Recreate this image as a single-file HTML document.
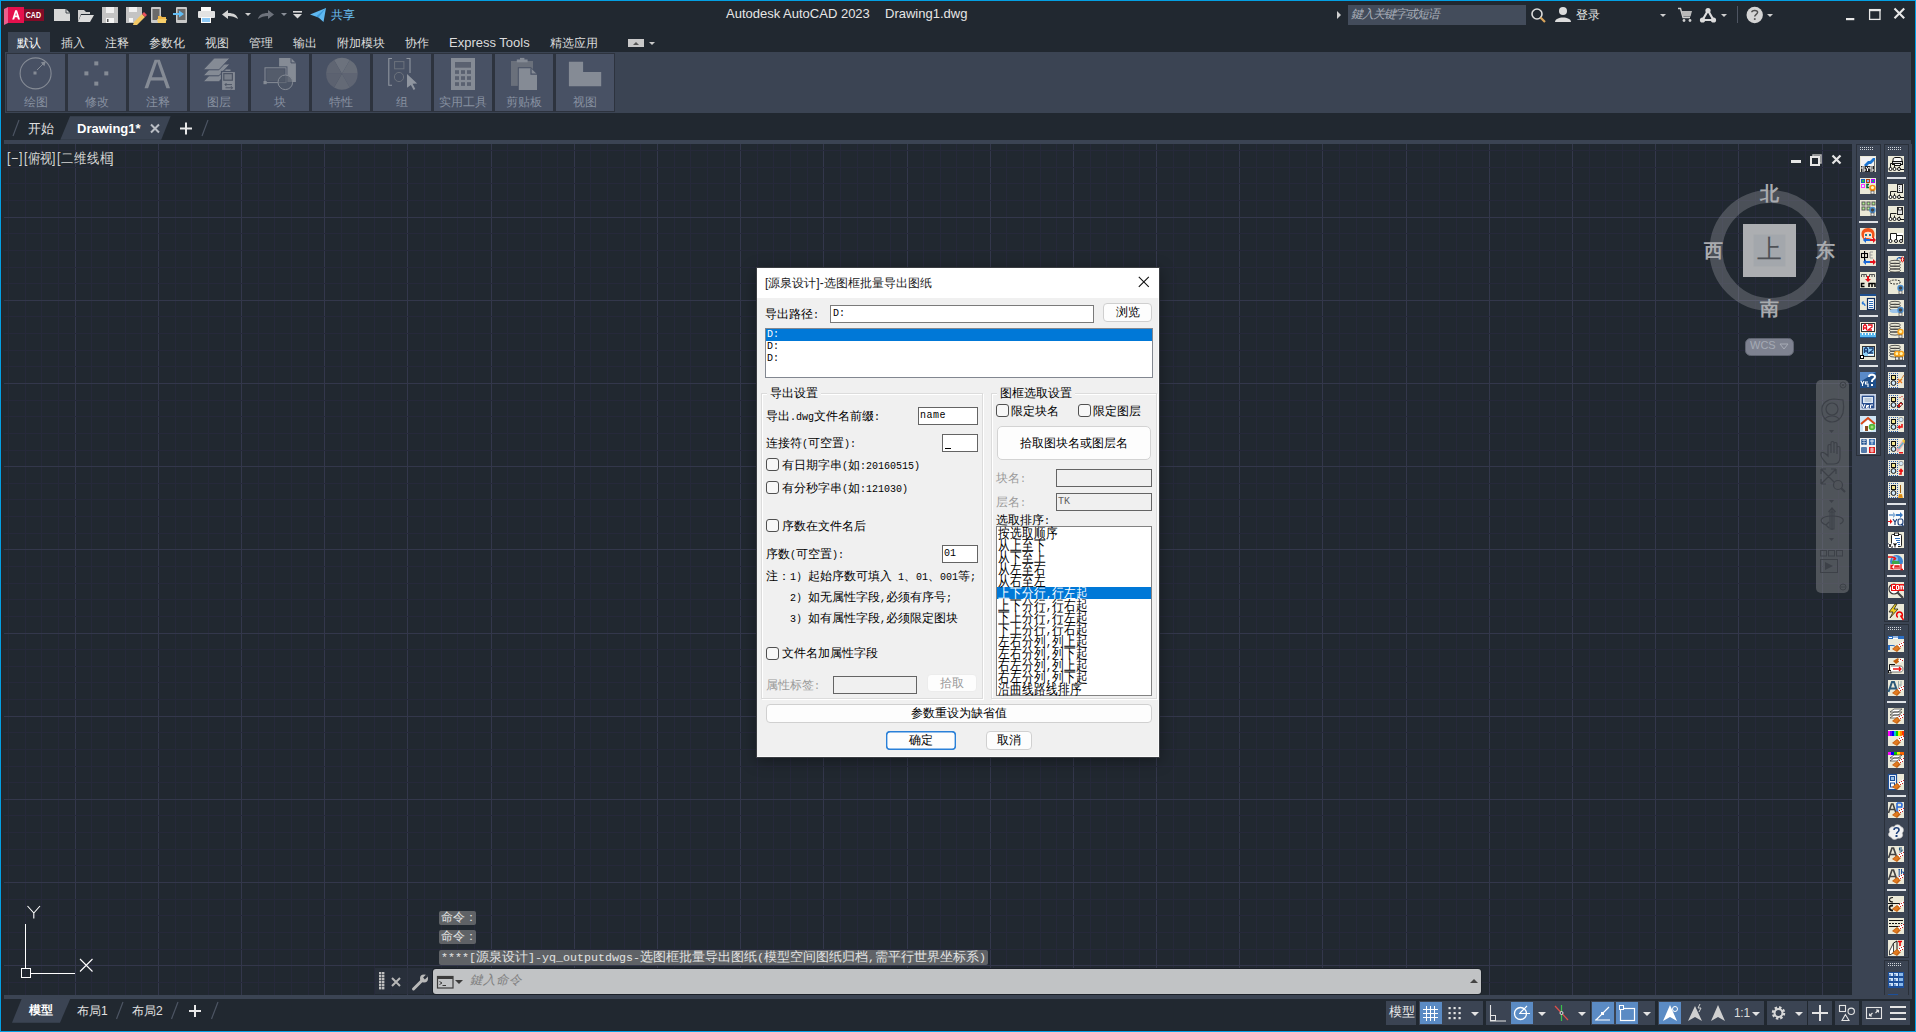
<!DOCTYPE html><html><head><meta charset="utf-8"><style>
*{margin:0;padding:0;box-sizing:border-box}
html,body{width:1916px;height:1032px;overflow:hidden;background:#212830;font-family:"Liberation Sans",sans-serif}
.a{position:absolute}
.t{position:absolute;white-space:nowrap;line-height:1}
svg{position:absolute;overflow:visible}
</style></head><body><div class="a" style="left:0;top:0;width:1916px;height:1032px;border:1px solid #03a0e4"></div>
<div class="a" style="left:1px;top:1px;width:1px;height:1030px;background:#262429"></div>
<svg style="left:0;top:0" width="50" height="30">
<path d="M4 9 L8 7 L8 23 L4 25 Z" fill="#ea5f8c"/>
<rect x="8" y="7" width="16" height="16" fill="#e5104d"/>
<rect x="24" y="9" width="20" height="12" fill="#820b27"/>
<path d="M12.2 19.5 L15.2 10.2 L17 10.2 L20 19.5 L18 19.5 L17.3 17.2 L14.9 17.2 L14.2 19.5 Z M15.4 15.4 L16.8 15.4 L16.1 12.6 Z" fill="#fff"/>
<text x="25.8" y="18.2" font-family="Liberation Sans" font-weight="bold" font-size="8.5" fill="#fff" textLength="15.2" lengthAdjust="spacingAndGlyphs">CAD</text>
</svg>
<svg style="left:0;top:0" width="360" height="30">
<path d="M54 9 H66 L70 13 V21 H54 Z" fill="#d8d8d8"/><path d="M66 9 L70 13 H66Z" fill="#212830" opacity=".0"/>
<path d="M66 9 V13 H70" fill="none" stroke="#212830" stroke-width="0.8"/>
<path d="M78 10 H84 L86 12 H90 V14 H81 L78 22 Z" fill="#cfcfcf"/><path d="M81 15 H94 L90 22 H78 Z" fill="#dcdcdc"/>
<path d="M102 7 H118 V23 H102 Z" fill="#c4c4c4"/><rect x="106" y="7" width="8" height="6" fill="#f0f0f0"/><rect x="106" y="18" width="8" height="5" fill="#f5f5f5"/><rect x="107" y="19" width="1.5" height="3" fill="#555"/>
<path d="M126 7 H142 V17 L135 23 H126 Z" fill="#c4c4c4"/><rect x="129" y="7" width="8" height="5" fill="#f0f0f0"/><rect x="129" y="18" width="4" height="4" fill="#f5f5f5"/>
<path d="M134 22 L142 14 L145 17 L137 25 L133 25 Z" fill="#f2c866"/><path d="M142 14 L144 12 L147 15 L145 17 Z" fill="#e8505a"/>
<rect x="151" y="7" width="10" height="16" rx="1" fill="#c9c9c9"/><rect x="152.5" y="9" width="7" height="11" fill="#6a6a6a"/>
<path d="M158 16 H161 L162 17 H166 V23 H158 Z" fill="#f0b84a"/><path d="M157 19 H167 L165 23 H158Z" fill="#f7cf6b"/>
<rect x="176" y="7" width="11" height="16" rx="1" fill="#c9c9c9"/><rect x="177.5" y="9" width="8" height="11" fill="#6a6a6a"/>
<path d="M173 13 H179 V10.5 L184 14 L179 17.5 V15 H173Z" fill="#62bdf5"/>
<rect x="201" y="7" width="10" height="5" fill="#fafafa"/><rect x="198" y="11" width="17" height="7" rx="1" fill="#e2e2e2"/><rect x="201" y="17" width="10" height="6" fill="#fafafa"/><rect x="202" y="18" width="8" height="4" fill="#8cc8f5"/>
<path d="M222 14.5 L228 10 V13 C234 13 237 15 238 19 C235 17 232 16 228 16 V19 Z" fill="#d4d4d4"/>
<path d="M245 13 H251 L248 16Z" fill="#cfcfcf"/>
<path d="M274 14.5 L268 10 V13 C262 13 259 15 258 19 C261 17 264 16 268 16 V19 Z" fill="#6d727b"/>
<path d="M281 13 H287 L284 16Z" fill="#8a8f98"/>
<rect x="293" y="11" width="9" height="1.6" fill="#d8d8d8"/><path d="M293 14 H302 L297.5 18.5Z" fill="#d8d8d8"/>
<path d="M310 14.5 L326 8 L323.5 22 L318.5 17.5 Z" fill="#5fb8f0"/><path d="M318.5 17.5 L326 8 L316 16.5Z" fill="#3d9ad8"/>
</svg>
<div class="t" style="left:331px;top:9px;font-size:12px;color:#6cc1f5">共享</div>
<div class="t" style="left:726px;top:7px;font-size:13px;color:#e6e6e6">Autodesk AutoCAD 2023</div>
<div class="t" style="left:885px;top:7px;font-size:13px;color:#e6e6e6">Drawing1.dwg</div>
<svg style="left:1330px;top:0" width="586" height="30">
<path d="M7 11 L11 15 L7 19Z" fill="#d0d0d0"/>
<rect x="18" y="5" width="178" height="20" fill="#434c5b"/>
<circle cx="207" cy="14" r="5" fill="none" stroke="#dcdcdc" stroke-width="1.6"/><path d="M210.5 17.5 L215 22" stroke="#d9a45a" stroke-width="2.2"/>
<circle cx="233" cy="11" r="4" fill="#dcdcdc"/><path d="M225 22 C225 16 241 16 241 22Z" fill="#dcdcdc"/>
<path d="M330 14 H336 L333 17Z" fill="#cfcfcf"/>
<path d="M348 8.5 H350.5 L353 17.5 H360" fill="none" stroke="#cfcfcf" stroke-width="1.4"/><path d="M351.5 11 H362 L360.5 16.5 H353Z" fill="#b9b9b9"/><circle cx="354" cy="20.5" r="1.4" fill="#cfcfcf"/><circle cx="360" cy="20.5" r="1.4" fill="#cfcfcf"/>
<path d="M378 10.5 L372.5 20 H383.5 Z" stroke="#dcdcdc" stroke-width="2.2" fill="none" stroke-linejoin="round"/><circle cx="378" cy="10.5" r="2.6" fill="#dcdcdc"/><circle cx="372.5" cy="20" r="2.6" fill="#dcdcdc"/><circle cx="383.5" cy="20" r="2.6" fill="#dcdcdc"/>
<path d="M391 14 H397 L394 17Z" fill="#cfcfcf"/>
<rect x="407" y="6" width="1" height="17" fill="#4e5562"/>
<circle cx="424.7" cy="15" r="8.2" fill="#d4d4d4"/>
<path d="M421.8 12.3 C421.8 9.8 427.6 9.8 427.6 12.3 C427.6 14.3 424.7 14.3 424.7 16.6" fill="none" stroke="#505050" stroke-width="1.5"/><rect x="423.9" y="18.2" width="1.7" height="1.7" fill="#505050"/>
<path d="M437 14 H443 L440 17Z" fill="#cfcfcf"/>
<rect x="516" y="18" width="8.3" height="2.2" fill="#e8e8e8"/>
<rect x="539.6" y="9.6" width="10.4" height="9.8" fill="none" stroke="#e8e8e8" stroke-width="1.3"/><rect x="539" y="9" width="11.6" height="2.2" fill="#e8e8e8"/>
<path d="M564.5 8.5 L574.2 18.2 M574.2 8.5 L564.5 18.2" stroke="#e8e8e8" stroke-width="2.1"/>
</svg>
<div class="t" style="left:1351px;top:8px;font-size:12px;color:#a7adb7;font-style:italic;letter-spacing:-1px">鍵入关键字或短语</div>
<div class="t" style="left:1576px;top:9px;font-size:12px;color:#e8e8e8">登录</div>
<div class="a" style="left:8px;top:32px;width:42px;height:20px;background:#3b4453"></div>
<div class="t" style="left:17px;top:37px;font-size:12px;color:#ffffff">默认</div>
<div class="t" style="left:61px;top:37px;font-size:12px;color:#dcdcdc">插入</div>
<div class="t" style="left:105px;top:37px;font-size:12px;color:#dcdcdc">注释</div>
<div class="t" style="left:149px;top:37px;font-size:12px;color:#dcdcdc">参数化</div>
<div class="t" style="left:205px;top:37px;font-size:12px;color:#dcdcdc">视图</div>
<div class="t" style="left:249px;top:37px;font-size:12px;color:#dcdcdc">管理</div>
<div class="t" style="left:293px;top:37px;font-size:12px;color:#dcdcdc">输出</div>
<div class="t" style="left:337px;top:37px;font-size:12px;color:#dcdcdc">附加模块</div>
<div class="t" style="left:405px;top:37px;font-size:12px;color:#dcdcdc">协作</div>
<div class="t" style="left:449px;top:36px;font-size:13px;color:#dcdcdc">Express Tools</div>
<div class="t" style="left:550px;top:37px;font-size:12px;color:#dcdcdc">精选应用</div>
<svg style="left:0;top:0" width="700" height="60">
<rect x="628" y="39" width="16" height="8" fill="#c9c9c9"/><path d="M633 45 L636 42 L639 45Z" fill="#555"/>
<path d="M649 42 H655 L652 45Z" fill="#c9c9c9"/></svg>
<div class="a" style="left:5px;top:52px;width:1906px;height:61px;background:#3b4453"></div>
<div class="a" style="left:6px;top:53px;width:609px;height:59px;background:#2d333e"></div>
<div class="a" style="left:7px;top:54px;width:58px;height:57px;background:#485164"></div>
<svg style="left:7px;top:52px" width="58" height="45"><circle cx="28.6" cy="21.4" r="15.5" fill="none" stroke="#858b95" stroke-width="1.1"/><rect x="26.5" y="19.5" width="3" height="3" fill="#858b95"/><path d="M30 18 L37 11" stroke="#858b95" stroke-width="1"/><path d="M38.8 9.2 L33.8 10.6 L37.4 14.2Z" fill="#858b95"/></svg>
<div class="t" style="left:7px;top:96px;width:58px;text-align:center;font-size:12px;color:#8790a0">绘图</div>
<div class="a" style="left:68px;top:54px;width:58px;height:57px;background:#485164"></div>
<svg style="left:68px;top:52px" width="58" height="45"><rect x="26.3" y="9.4" width="4" height="4" fill="#858b95"/><rect x="16.4" y="19.4" width="4" height="4" fill="#858b95"/><rect x="36.3" y="19.4" width="4" height="4" fill="#858b95"/><rect x="26.3" y="29.6" width="4" height="4" fill="#858b95"/></svg>
<div class="t" style="left:68px;top:96px;width:58px;text-align:center;font-size:12px;color:#8790a0">修改</div>
<div class="a" style="left:129px;top:54px;width:58px;height:57px;background:#485164"></div>
<svg style="left:129px;top:52px" width="58" height="45"><path d="M15.5 36.2 L25.6 7.8 H30.8 L41 36.2 H37.4 L34.7 28.6 H21.8 L19.1 36.2 Z M22.9 25.3 H33.6 L28.2 9.8 Z" fill="#858b95"/></svg>
<div class="t" style="left:129px;top:96px;width:58px;text-align:center;font-size:12px;color:#8790a0">注释</div>
<div class="a" style="left:190px;top:54px;width:58px;height:57px;background:#485164"></div>
<svg style="left:190px;top:52px" width="58" height="45"><path d="M13 29.8 L24.3 18 H40.1 L28.9 29.8 Z" fill="#858b95" stroke="#485164" stroke-width="1"/><path d="M13 23.8 L24.3 12 H40.1 L28.9 23.8 Z" fill="#858b95" stroke="#485164" stroke-width="1"/><path d="M13 17.8 L24.3 6 H40.1 L28.9 17.8 Z" fill="#858b95" stroke="#485164" stroke-width="1"/><rect x="31.5" y="19.5" width="14" height="19" fill="#858b95" stroke="#485164" stroke-width="1.2"/><rect x="33.8" y="21.6" width="8.6" height="6.6" fill="#7a808b" stroke="#4e5565" stroke-width="1.2"/><path d="M35 32.6 H42 M35.5 35.8 H42.5" stroke="#4e5565" stroke-width="1"/><path d="M36.5 31 L35 32.6 L36.5 34.2 M41 34.2 L42.5 35.8 L41 37.4" fill="none" stroke="#4e5565" stroke-width="1"/><rect x="35.5" y="17.5" width="5" height="1.5" fill="#858b95"/></svg>
<div class="t" style="left:190px;top:96px;width:58px;text-align:center;font-size:12px;color:#8790a0">图层</div>
<div class="a" style="left:251px;top:54px;width:58px;height:57px;background:#485164"></div>
<svg style="left:251px;top:52px" width="58" height="45"><path d="M28.1 6 H40 L44.9 10.9 V30 H28.1Z" fill="#858b95"/><path d="M40 6 V10.9 H44.9" fill="none" stroke="#485164" stroke-width="1"/><rect x="14" y="15.8" width="21" height="14.8" fill="#545c6b" stroke="#485164" stroke-width="2.8"/><rect x="14" y="15.8" width="21" height="14.8" fill="none" stroke="#858b95" stroke-width="1"/><circle cx="34.3" cy="30.3" r="7.3" fill="#505868" fill-opacity=".6" stroke="#858b95" stroke-width="1"/><rect x="12.5" y="29" width="3.2" height="3.2" fill="#858b95"/></svg>
<div class="t" style="left:251px;top:96px;width:58px;text-align:center;font-size:12px;color:#8790a0">块</div>
<div class="a" style="left:312px;top:54px;width:58px;height:57px;background:#485164"></div>
<svg style="left:312px;top:52px" width="58" height="45"><path d="M29.9 21.7 L37.8 8 A15.8 15.8 0 0 0 22 8 Z" fill="#6c727d"/><path d="M29.9 21.7 L45.7 21.7 A15.8 15.8 0 0 0 37.8 8 Z" fill="#676d78"/><path d="M29.9 21.7 L37.8 35.4 A15.8 15.8 0 0 0 45.7 21.7 Z" fill="#5f6573"/><path d="M29.9 21.7 L22 35.4 A15.8 15.8 0 0 0 37.8 35.4 Z" fill="#646a76"/><path d="M29.9 21.7 L14.1 21.7 A15.8 15.8 0 0 0 22 35.4 Z" fill="#5c6270"/><path d="M29.9 21.7 L22 8 A15.8 15.8 0 0 0 14.1 21.7 Z" fill="#5f6572"/></svg>
<div class="t" style="left:312px;top:96px;width:58px;text-align:center;font-size:12px;color:#8790a0">特性</div>
<div class="a" style="left:373px;top:54px;width:58px;height:57px;background:#485164"></div>
<svg style="left:373px;top:52px" width="58" height="45"><path d="M19 6.5 H15.8 V33.2 H19 M33.5 6.5 H37 V21" fill="none" stroke="#8f959f" stroke-width="1.1"/><rect x="21.6" y="9.6" width="9.3" height="7.2" fill="none" stroke="#6c727c" stroke-width="1"/><circle cx="26" cy="25" r="4.6" fill="none" stroke="#6c727c" stroke-width="1"/><path d="M34 22 L44.2 31.6 L39.6 31.8 L42.3 37 L40.6 37.9 L37.9 32.9 L34 35.8Z" fill="#8f959f"/></svg>
<div class="t" style="left:373px;top:96px;width:58px;text-align:center;font-size:12px;color:#8790a0">组</div>
<div class="a" style="left:434px;top:54px;width:58px;height:57px;background:#485164"></div>
<svg style="left:434px;top:52px" width="58" height="45"><rect x="17" y="6" width="24" height="32" fill="#858b95"/><rect x="21" y="10" width="16" height="5.7" fill="#5a6170"/><rect x="21" y="18.2" width="4" height="3.7" fill="#5a6170"/><rect x="21" y="24.2" width="4" height="3.7" fill="#5a6170"/><rect x="21" y="30.2" width="4" height="3.7" fill="#5a6170"/><rect x="27" y="18.2" width="4" height="3.7" fill="#5a6170"/><rect x="27" y="24.2" width="4" height="3.7" fill="#5a6170"/><rect x="27" y="30.2" width="4" height="3.7" fill="#5a6170"/><rect x="33" y="18.2" width="4" height="3.7" fill="#5a6170"/><rect x="33" y="24.2" width="4" height="3.7" fill="#5a6170"/><rect x="33" y="30.2" width="4" height="3.7" fill="#5a6170"/></svg>
<div class="t" style="left:434px;top:96px;width:58px;text-align:center;font-size:12px;color:#8790a0">实用工具</div>
<div class="a" style="left:495px;top:54px;width:58px;height:57px;background:#485164"></div>
<svg style="left:495px;top:52px" width="58" height="45"><path d="M16 9 H38 V33.9 H16Z" fill="#6a707b"/><rect x="21.8" y="7.5" width="10.8" height="2.8" fill="#858b95"/><rect x="25" y="5.9" width="4.4" height="2" fill="#858b95"/><path d="M22.8 15.2 H36 L43 22.2 V39 H22.8Z" fill="#485164"/><path d="M23.8 16.2 H36 L42 22.2 V38 H23.8Z" fill="#858b95"/><path d="M36 16.2 V22.2 H42" fill="none" stroke="#485164" stroke-width="1.2"/></svg>
<div class="t" style="left:495px;top:96px;width:58px;text-align:center;font-size:12px;color:#8790a0">剪贴板</div>
<div class="a" style="left:556px;top:54px;width:58px;height:57px;background:#485164"></div>
<svg style="left:556px;top:52px" width="58" height="45"><path d="M12.9 9.8 H27.1 V20.1 H45.2 V34.2 H12.9Z" fill="#858b95"/></svg>
<div class="t" style="left:556px;top:96px;width:58px;text-align:center;font-size:12px;color:#8790a0">视图</div>
<svg style="left:0;top:110px" width="260" height="34"><path d="M13 26 L19 10" stroke="#4d5563" stroke-width="1.2"/><path d="M70 6.3 H170.6 L161.2 29.7 H60.3Z" fill="#3b4453"/><path d="M151 14.5 L159 22.5 M159 14.5 L151 22.5" stroke="#b9bdc4" stroke-width="2"/><path d="M180 18.5 H192 M186 12.5 V24.5" stroke="#e8e8e8" stroke-width="2"/><path d="M202 26 L208 10" stroke="#4d5563" stroke-width="1.2"/></svg>
<div class="t" style="left:28px;top:122px;font-size:13px;color:#e0e0e0">开始</div>
<div class="t" style="left:77px;top:122px;font-size:13px;color:#ffffff;font-weight:bold">Drawing1*</div>
<div class="a" style="left:4px;top:140px;width:1907px;height:4px;background:#3b4453"></div>
<svg style="left:0;top:0" width="1916" height="1032"><rect x="8" y="144" width="1" height="851" fill="#26293a"/><rect x="25" y="144" width="1" height="851" fill="#26293a"/><rect x="41" y="144" width="1" height="851" fill="#26293a"/><rect x="58" y="144" width="1" height="851" fill="#26293a"/><rect x="75" y="144" width="1" height="851" fill="#33374b"/><rect x="91" y="144" width="1" height="851" fill="#26293a"/><rect x="108" y="144" width="1" height="851" fill="#26293a"/><rect x="125" y="144" width="1" height="851" fill="#26293a"/><rect x="141" y="144" width="1" height="851" fill="#26293a"/><rect x="158" y="144" width="1" height="851" fill="#33374b"/><rect x="175" y="144" width="1" height="851" fill="#26293a"/><rect x="191" y="144" width="1" height="851" fill="#26293a"/><rect x="208" y="144" width="1" height="851" fill="#26293a"/><rect x="224" y="144" width="1" height="851" fill="#26293a"/><rect x="241" y="144" width="1" height="851" fill="#33374b"/><rect x="258" y="144" width="1" height="851" fill="#26293a"/><rect x="274" y="144" width="1" height="851" fill="#26293a"/><rect x="291" y="144" width="1" height="851" fill="#26293a"/><rect x="308" y="144" width="1" height="851" fill="#26293a"/><rect x="324" y="144" width="1" height="851" fill="#33374b"/><rect x="341" y="144" width="1" height="851" fill="#26293a"/><rect x="358" y="144" width="1" height="851" fill="#26293a"/><rect x="374" y="144" width="1" height="851" fill="#26293a"/><rect x="391" y="144" width="1" height="851" fill="#26293a"/><rect x="407" y="144" width="1" height="851" fill="#33374b"/><rect x="424" y="144" width="1" height="851" fill="#26293a"/><rect x="441" y="144" width="1" height="851" fill="#26293a"/><rect x="457" y="144" width="1" height="851" fill="#26293a"/><rect x="474" y="144" width="1" height="851" fill="#26293a"/><rect x="491" y="144" width="1" height="851" fill="#33374b"/><rect x="507" y="144" width="1" height="851" fill="#26293a"/><rect x="524" y="144" width="1" height="851" fill="#26293a"/><rect x="541" y="144" width="1" height="851" fill="#26293a"/><rect x="557" y="144" width="1" height="851" fill="#26293a"/><rect x="574" y="144" width="1" height="851" fill="#33374b"/><rect x="590" y="144" width="1" height="851" fill="#26293a"/><rect x="607" y="144" width="1" height="851" fill="#26293a"/><rect x="624" y="144" width="1" height="851" fill="#26293a"/><rect x="640" y="144" width="1" height="851" fill="#26293a"/><rect x="657" y="144" width="1" height="851" fill="#33374b"/><rect x="674" y="144" width="1" height="851" fill="#26293a"/><rect x="690" y="144" width="1" height="851" fill="#26293a"/><rect x="707" y="144" width="1" height="851" fill="#26293a"/><rect x="724" y="144" width="1" height="851" fill="#26293a"/><rect x="740" y="144" width="1" height="851" fill="#33374b"/><rect x="757" y="144" width="1" height="851" fill="#26293a"/><rect x="773" y="144" width="1" height="851" fill="#26293a"/><rect x="790" y="144" width="1" height="851" fill="#26293a"/><rect x="807" y="144" width="1" height="851" fill="#26293a"/><rect x="823" y="144" width="1" height="851" fill="#33374b"/><rect x="840" y="144" width="1" height="851" fill="#26293a"/><rect x="857" y="144" width="1" height="851" fill="#26293a"/><rect x="873" y="144" width="1" height="851" fill="#26293a"/><rect x="890" y="144" width="1" height="851" fill="#26293a"/><rect x="907" y="144" width="1" height="851" fill="#33374b"/><rect x="923" y="144" width="1" height="851" fill="#26293a"/><rect x="940" y="144" width="1" height="851" fill="#26293a"/><rect x="956" y="144" width="1" height="851" fill="#26293a"/><rect x="973" y="144" width="1" height="851" fill="#26293a"/><rect x="990" y="144" width="1" height="851" fill="#33374b"/><rect x="1006" y="144" width="1" height="851" fill="#26293a"/><rect x="1023" y="144" width="1" height="851" fill="#26293a"/><rect x="1040" y="144" width="1" height="851" fill="#26293a"/><rect x="1056" y="144" width="1" height="851" fill="#26293a"/><rect x="1073" y="144" width="1" height="851" fill="#33374b"/><rect x="1090" y="144" width="1" height="851" fill="#26293a"/><rect x="1106" y="144" width="1" height="851" fill="#26293a"/><rect x="1123" y="144" width="1" height="851" fill="#26293a"/><rect x="1139" y="144" width="1" height="851" fill="#26293a"/><rect x="1156" y="144" width="1" height="851" fill="#33374b"/><rect x="1173" y="144" width="1" height="851" fill="#26293a"/><rect x="1189" y="144" width="1" height="851" fill="#26293a"/><rect x="1206" y="144" width="1" height="851" fill="#26293a"/><rect x="1223" y="144" width="1" height="851" fill="#26293a"/><rect x="1239" y="144" width="1" height="851" fill="#33374b"/><rect x="1256" y="144" width="1" height="851" fill="#26293a"/><rect x="1273" y="144" width="1" height="851" fill="#26293a"/><rect x="1289" y="144" width="1" height="851" fill="#26293a"/><rect x="1306" y="144" width="1" height="851" fill="#26293a"/><rect x="1322" y="144" width="1" height="851" fill="#33374b"/><rect x="1339" y="144" width="1" height="851" fill="#26293a"/><rect x="1356" y="144" width="1" height="851" fill="#26293a"/><rect x="1372" y="144" width="1" height="851" fill="#26293a"/><rect x="1389" y="144" width="1" height="851" fill="#26293a"/><rect x="1406" y="144" width="1" height="851" fill="#33374b"/><rect x="1422" y="144" width="1" height="851" fill="#26293a"/><rect x="1439" y="144" width="1" height="851" fill="#26293a"/><rect x="1456" y="144" width="1" height="851" fill="#26293a"/><rect x="1472" y="144" width="1" height="851" fill="#26293a"/><rect x="1489" y="144" width="1" height="851" fill="#33374b"/><rect x="1505" y="144" width="1" height="851" fill="#26293a"/><rect x="1522" y="144" width="1" height="851" fill="#26293a"/><rect x="1539" y="144" width="1" height="851" fill="#26293a"/><rect x="1555" y="144" width="1" height="851" fill="#26293a"/><rect x="1572" y="144" width="1" height="851" fill="#33374b"/><rect x="1589" y="144" width="1" height="851" fill="#26293a"/><rect x="1605" y="144" width="1" height="851" fill="#26293a"/><rect x="1622" y="144" width="1" height="851" fill="#26293a"/><rect x="1639" y="144" width="1" height="851" fill="#26293a"/><rect x="1655" y="144" width="1" height="851" fill="#33374b"/><rect x="1672" y="144" width="1" height="851" fill="#26293a"/><rect x="1688" y="144" width="1" height="851" fill="#26293a"/><rect x="1705" y="144" width="1" height="851" fill="#26293a"/><rect x="1722" y="144" width="1" height="851" fill="#26293a"/><rect x="1738" y="144" width="1" height="851" fill="#33374b"/><rect x="1755" y="144" width="1" height="851" fill="#26293a"/><rect x="1772" y="144" width="1" height="851" fill="#26293a"/><rect x="1788" y="144" width="1" height="851" fill="#26293a"/><rect x="1805" y="144" width="1" height="851" fill="#26293a"/><rect x="1822" y="144" width="1" height="851" fill="#33374b"/><rect x="1838" y="144" width="1" height="851" fill="#26293a"/><rect x="4" y="150" width="1848" height="1" fill="#26293a"/><rect x="4" y="167" width="1848" height="1" fill="#26293a"/><rect x="4" y="183" width="1848" height="1" fill="#26293a"/><rect x="4" y="200" width="1848" height="1" fill="#26293a"/><rect x="4" y="217" width="1848" height="1" fill="#33374b"/><rect x="4" y="233" width="1848" height="1" fill="#26293a"/><rect x="4" y="250" width="1848" height="1" fill="#26293a"/><rect x="4" y="267" width="1848" height="1" fill="#26293a"/><rect x="4" y="283" width="1848" height="1" fill="#26293a"/><rect x="4" y="300" width="1848" height="1" fill="#33374b"/><rect x="4" y="316" width="1848" height="1" fill="#26293a"/><rect x="4" y="333" width="1848" height="1" fill="#26293a"/><rect x="4" y="350" width="1848" height="1" fill="#26293a"/><rect x="4" y="366" width="1848" height="1" fill="#26293a"/><rect x="4" y="383" width="1848" height="1" fill="#33374b"/><rect x="4" y="400" width="1848" height="1" fill="#26293a"/><rect x="4" y="416" width="1848" height="1" fill="#26293a"/><rect x="4" y="433" width="1848" height="1" fill="#26293a"/><rect x="4" y="450" width="1848" height="1" fill="#26293a"/><rect x="4" y="466" width="1848" height="1" fill="#33374b"/><rect x="4" y="483" width="1848" height="1" fill="#26293a"/><rect x="4" y="499" width="1848" height="1" fill="#26293a"/><rect x="4" y="516" width="1848" height="1" fill="#26293a"/><rect x="4" y="533" width="1848" height="1" fill="#26293a"/><rect x="4" y="549" width="1848" height="1" fill="#33374b"/><rect x="4" y="566" width="1848" height="1" fill="#26293a"/><rect x="4" y="583" width="1848" height="1" fill="#26293a"/><rect x="4" y="599" width="1848" height="1" fill="#26293a"/><rect x="4" y="616" width="1848" height="1" fill="#26293a"/><rect x="4" y="633" width="1848" height="1" fill="#33374b"/><rect x="4" y="649" width="1848" height="1" fill="#26293a"/><rect x="4" y="666" width="1848" height="1" fill="#26293a"/><rect x="4" y="682" width="1848" height="1" fill="#26293a"/><rect x="4" y="699" width="1848" height="1" fill="#26293a"/><rect x="4" y="716" width="1848" height="1" fill="#33374b"/><rect x="4" y="732" width="1848" height="1" fill="#26293a"/><rect x="4" y="749" width="1848" height="1" fill="#26293a"/><rect x="4" y="766" width="1848" height="1" fill="#26293a"/><rect x="4" y="782" width="1848" height="1" fill="#26293a"/><rect x="4" y="799" width="1848" height="1" fill="#33374b"/><rect x="4" y="815" width="1848" height="1" fill="#26293a"/><rect x="4" y="832" width="1848" height="1" fill="#26293a"/><rect x="4" y="849" width="1848" height="1" fill="#26293a"/><rect x="4" y="865" width="1848" height="1" fill="#26293a"/><rect x="4" y="882" width="1848" height="1" fill="#33374b"/><rect x="4" y="899" width="1848" height="1" fill="#26293a"/><rect x="4" y="915" width="1848" height="1" fill="#26293a"/><rect x="4" y="932" width="1848" height="1" fill="#26293a"/><rect x="4" y="949" width="1848" height="1" fill="#26293a"/><rect x="4" y="965" width="1848" height="1" fill="#33374b"/><rect x="4" y="982" width="1848" height="1" fill="#26293a"/></svg>
<div class="t" style="left:7px;top:151px;font-size:14px;color:#d4d4d4;transform:scaleX(0.88);transform-origin:0 0">[</div>
<div class="t" style="left:11px;top:151px;font-size:14px;color:#d4d4d4;transform:scaleX(0.88);transform-origin:0 0">−</div>
<div class="t" style="left:19px;top:151px;font-size:14px;color:#d4d4d4;transform:scaleX(0.88);transform-origin:0 0">]</div>
<div class="t" style="left:24px;top:151px;font-size:14px;color:#d4d4d4;transform:scaleX(0.88);transform-origin:0 0">[</div>
<div class="t" style="left:27.5px;top:151px;font-size:14px;color:#d4d4d4;transform:scaleX(0.88);transform-origin:0 0">俯</div>
<div class="t" style="left:39.5px;top:151px;font-size:14px;color:#d4d4d4;transform:scaleX(0.88);transform-origin:0 0">视</div>
<div class="t" style="left:52px;top:151px;font-size:14px;color:#d4d4d4;transform:scaleX(0.88);transform-origin:0 0">]</div>
<div class="t" style="left:57px;top:151px;font-size:14px;color:#d4d4d4;transform:scaleX(0.88);transform-origin:0 0">[</div>
<div class="t" style="left:60.5px;top:151px;font-size:14px;color:#d4d4d4;transform:scaleX(0.88);transform-origin:0 0">二</div>
<div class="t" style="left:73.5px;top:151px;font-size:14px;color:#d4d4d4;transform:scaleX(0.88);transform-origin:0 0">维</div>
<div class="t" style="left:87px;top:151px;font-size:14px;color:#d4d4d4;transform:scaleX(0.88);transform-origin:0 0">线</div>
<div class="t" style="left:100px;top:151px;font-size:14px;color:#d4d4d4;transform:scaleX(0.88);transform-origin:0 0">框</div>
<div class="t" style="left:110px;top:151px;font-size:14px;color:#d4d4d4;transform:scaleX(0.88);transform-origin:0 0">]</div>
<svg style="left:0;top:0" width="1916" height="400">
<rect x="1791" y="160" width="10" height="3" fill="#e6e6e6"/>
<rect x="1813" y="155" width="8" height="8" fill="none" stroke="#b8b8b8" stroke-width="1.5"/><rect x="1811" y="157" width="8" height="8" fill="#212830" stroke="#e6e6e6" stroke-width="2"/>
<path d="M1832.5 155.5 L1840.5 163.5 M1840.5 155.5 L1832.5 163.5" stroke="#e6e6e6" stroke-width="2.2"/>
<circle cx="1770" cy="250.5" r="54" fill="none" stroke="#a0a3aa" stroke-opacity="0.33" stroke-width="13"/>
<rect x="1743" y="224" width="53" height="53" fill="#acaeb1"/>
<rect x="1753.5" y="234.5" width="32" height="32" fill="#a3a7ac"/>
<rect x="1745.5" y="338.5" width="48" height="17" rx="5" fill="#7e8290" stroke="#5f6470" stroke-width="1"/>
<path d="M1780 344 H1788 L1784 349Z" fill="none" stroke="#a7abb5" stroke-width="1"/>
</svg>
<div class="t" style="left:1756px;top:236px;font-size:26px;font-weight:300;color:#4f5257;transform:scaleX(0.95)">上</div>
<div class="t" style="left:1760px;top:184px;font-size:19px;font-weight:bold;color:#a9abaf">北</div>
<div class="t" style="left:1760px;top:299px;font-size:19px;font-weight:bold;color:#a9abaf">南</div>
<div class="t" style="left:1704px;top:241px;font-size:19px;font-weight:bold;color:#a9abaf">西</div>
<div class="t" style="left:1816px;top:241px;font-size:19px;font-weight:bold;color:#a9abaf">东</div>
<div class="t" style="left:1750px;top:340px;font-size:11px;color:#a5aab4">WCS</div>
<svg style="left:0;top:0" width="1916" height="620">
<rect x="1816" y="380" width="33" height="213" rx="5" fill="#7e8084" fill-opacity="0.5"/>
<circle cx="1843" cy="385" r="3" fill="none" stroke="#3d4148" stroke-width="1"/><path d="M1841.5 383.5 L1844.5 386.5 M1844.5 383.5 L1841.5 386.5" stroke="#3d4148" stroke-width=".8"/>
<path d="M1822 411 C1821 403 1828 399 1834 399 L1843 400 C1844 405 1844 408 1843 413 C1841 419 1837 422 1832 422 C1826 422 1822 417 1822 411Z" fill="none" stroke="#3d4148" stroke-width="1.2"/><circle cx="1832" cy="409" r="6" fill="none" stroke="#3d4148" stroke-width="1.2"/><path d="M1825 419 C1828 415 1836 415 1839 419" fill="none" stroke="#3d4148" stroke-width="1.2"/>
<path d="M1829 430 H1834 L1831.5 433Z" fill="#3d4148"/>
<path d="M1827 464 C1823 460 1820 456 1821 453 C1823 451 1826 454 1828 456 V446 C1828 444 1831 444 1831 446 V453 V443 C1831 441 1834 441 1834 443 V453 V444 C1834 442 1837 442 1837 444 V454 V448 C1837 446 1840 446 1840 448 V457 C1840 461 1838 464 1834 464Z" fill="none" stroke="#3d4148" stroke-width="1.2"/>
<path d="M1821 469 L1837 485 M1836 469 L1821 484 M1821 469 V474 M1821 469 H1826 M1836 469 H1831 M1836 469 V474 M1821 484 V479 M1821 484 H1826" fill="none" stroke="#3d4148" stroke-width="1.2"/><circle cx="1838" cy="485" r="4.5" fill="#4f5359" stroke="#3d4148" stroke-width="1.2"/><path d="M1841 488 L1845 492" stroke="#3d4148" stroke-width="2"/>
<path d="M1829 500 H1834 L1831.5 503Z" fill="#3d4148"/>
<path d="M1832 508 V530 M1828.5 512 L1832 508 L1835.5 512" fill="none" stroke="#3d4148" stroke-width="1.2"/><rect x="1830" y="512" width="4" height="17" fill="none" stroke="#3d4148" stroke-width="1"/><path d="M1826 525 C1818 522 1820 516 1832 516 C1844 516 1846 521 1840 524 M1826 525 L1829 522 M1826 525 L1829 528" fill="none" stroke="#3d4148" stroke-width="1.2"/>
<path d="M1829 538 H1834 L1831.5 541Z" fill="#3d4148"/>
<rect x="1820.5" y="550.5" width="6" height="5.5" fill="none" stroke="#3d4148"/><rect x="1828.5" y="550.5" width="6" height="5.5" fill="none" stroke="#3d4148"/><rect x="1836.5" y="550.5" width="6" height="5.5" fill="none" stroke="#3d4148"/>
<rect x="1820.5" y="559.5" width="17" height="13" fill="none" stroke="#3d4148"/><path d="M1825 562 L1833 566 L1825 570Z" fill="#3d4148"/>
<circle cx="1843" cy="587" r="3" fill="none" stroke="#3d4148" stroke-width="1"/><path d="M1841 587 H1845" stroke="#3d4148" stroke-width=".8"/>
</svg>
<svg style="left:0;top:0" width="120" height="1000">
<rect x="25" y="924" width="1" height="45" fill="#fff"/><rect x="31" y="973" width="44" height="1" fill="#fff"/>
<rect x="21.5" y="968.5" width="9" height="9" fill="none" stroke="#ffffff" stroke-width="1"/>
<path d="M80 959 L92.5 971.5 M92.5 959 L80 971.5" stroke="#ffffff" stroke-width="1.1"/>
<path d="M27.5 906 L33.8 913 L40 906 M33.8 913 V918.5" fill="none" stroke="#ffffff" stroke-width="1.1"/>
</svg>
<div class="a" style="left:439px;top:911px;width:37px;height:14px;background:#5f6266;border-radius:2px"></div>
<div class="a" style="left:439px;top:930px;width:37px;height:14px;background:#5f6266;border-radius:2px"></div>
<div class="a" style="left:439px;top:950px;width:549px;height:15px;background:#5f6266;border-radius:2px"></div>
<div class="t" style="left:441px;top:911px;font-size:12px;color:#e2e2e2">命令：</div>
<div class="t" style="left:441px;top:930px;font-size:12px;color:#e2e2e2">命令：</div>
<div class="t" style="left:441px;top:951px;font-size:13px;color:#e2e2e2;font-family:'Liberation Mono',monospace"><span style="font-size:11.67px">****[</span>源泉设计<span style="font-size:11.67px">]-yq_outputdwgs-</span>选图框批量导出图纸<span style="font-size:11.67px">(</span>模型空间图纸归档<span style="font-size:11.67px">,</span>需平行世界坐标系<span style="font-size:11.67px">)</span></div>
<div class="a" style="left:375px;top:968px;width:58px;height:26px;background:rgba(44,50,62,0.7)"></div>
<div class="a" style="left:433px;top:969px;width:48px;height:25px"></div>
<div class="a" style="left:432px;top:968px;width:1050px;height:27px;background:#1b2028;border-radius:4px"></div>
<div class="a" style="left:433px;top:969px;width:1048px;height:25px;background:#c1c3c5;border-radius:3px"></div>
<svg style="left:0;top:0" width="1500" height="1000">
<rect x="379" y="972" width="2.4" height="2.4" fill="#bfbfbf"/><rect x="379" y="975" width="2.4" height="2.4" fill="#bfbfbf"/><rect x="379" y="978" width="2.4" height="2.4" fill="#bfbfbf"/><rect x="379" y="981" width="2.4" height="2.4" fill="#bfbfbf"/><rect x="379" y="984" width="2.4" height="2.4" fill="#bfbfbf"/><rect x="379" y="987" width="2.4" height="2.4" fill="#bfbfbf"/><rect x="382" y="972" width="2.4" height="2.4" fill="#bfbfbf"/><rect x="382" y="975" width="2.4" height="2.4" fill="#bfbfbf"/><rect x="382" y="978" width="2.4" height="2.4" fill="#bfbfbf"/><rect x="382" y="981" width="2.4" height="2.4" fill="#bfbfbf"/><rect x="382" y="984" width="2.4" height="2.4" fill="#bfbfbf"/><rect x="382" y="987" width="2.4" height="2.4" fill="#bfbfbf"/>
<path d="M392 978 L400 986 M400 978 L392 986" stroke="#b7b7b7" stroke-width="2"/>
<path d="M413.5 989 L422 980.5" stroke="#b9b9b9" stroke-width="3" stroke-linecap="round"/><circle cx="424" cy="978.5" r="4" fill="#b9b9b9"/><path d="M424 978.5 L427 975.5" stroke="#282e39" stroke-width="2.5"/>
<rect x="437.5" y="976.5" width="15.5" height="11.5" fill="none" stroke="#3b3b3b" stroke-width="1.2"/><rect x="438" y="977" width="15" height="2" fill="#3b3b3b"/>
<path d="M439.5 981.5 L442 983 L439.5 984.5 M442.5 985.5 H446" fill="none" stroke="#3b3b3b" stroke-width="1"/>
<path d="M455 980 H463 L459 984Z" fill="#3b3b3b"/>
<path d="M1470 983 H1478 L1474 979Z" fill="#444"/>
</svg>
<div class="t" style="left:470px;top:974px;font-size:12.5px;color:#808080;font-style:italic">鍵入命令</div>
<div class="a" style="left:1852px;top:144px;width:60px;height:855px;background:#3b4453"></div>
<div class="a" style="left:1852px;top:995px;width:60px;height:4px;background:#3b4453"></div>
<div class="a" style="left:1856px;top:144px;width:25px;height:312px;border:1px solid #2a303a;background:#3b4453"></div>
<svg style="left:1856px;top:144px" width="25" height="8"><rect x="4" y="3" width="1" height="1" fill="#d0d4da"/><rect x="4" y="5" width="1" height="1" fill="#d0d4da"/><rect x="6" y="3" width="1" height="1" fill="#d0d4da"/><rect x="6" y="5" width="1" height="1" fill="#d0d4da"/><rect x="8" y="3" width="1" height="1" fill="#d0d4da"/><rect x="8" y="5" width="1" height="1" fill="#d0d4da"/><rect x="10" y="3" width="1" height="1" fill="#d0d4da"/><rect x="10" y="5" width="1" height="1" fill="#d0d4da"/><rect x="12" y="3" width="1" height="1" fill="#d0d4da"/><rect x="12" y="5" width="1" height="1" fill="#d0d4da"/><rect x="14" y="3" width="1" height="1" fill="#d0d4da"/><rect x="14" y="5" width="1" height="1" fill="#d0d4da"/><rect x="16" y="3" width="1" height="1" fill="#d0d4da"/><rect x="16" y="5" width="1" height="1" fill="#d0d4da"/></svg>
<svg style="left:1860px;top:156px" width="16" height="16"><rect width="16" height="16" fill="#ebe9d8"/><rect x="1" y="1" width="14" height="9" fill="#f2f2f2"/><path d="M4 9 L8 5 H10 L13 2 H15 V4 L11 8 H9 L6 11Z" fill="#1a74d0"/><rect x="1" y="10" width="14" height="6" fill="#222"/><path d="M2 11 H5 M2 11 V13 H5 V15 H2 M6 11 L7.5 13 L9 11 M7.5 13 V15 M13 11 H10 V13 H13 V15 H10" fill="none" stroke="#fff" stroke-width="1"/><rect x="14" y="4" width="1" height="12" fill="#777"/></svg>
<svg style="left:1860px;top:178px" width="16" height="16"><rect width="16" height="16" fill="#ebe9d8"/><rect x="1" y="1" width="4" height="4" fill="#1a5fc0"/><rect x="2" y="2" width="2" height="2" fill="#3c3"/><rect x="6" y="1" width="4" height="4" fill="#b04010"/><rect x="7" y="2" width="2" height="2" fill="#8af"/><rect x="11" y="1" width="4" height="4" fill="#a0f"/><rect x="12" y="2" width="2" height="2" fill="#0c6"/><rect x="1" y="6" width="4" height="4" fill="#f3f"/><rect x="2" y="7" width="2" height="2" fill="#cff"/><path d="M9 6.5 H7 V9.5 H9" fill="none" stroke="#063" stroke-width="1.5"/><circle cx="12.5" cy="10" r="3.2" fill="#f78a10"/><circle cx="12.5" cy="9.6" r="1.6" fill="#fff8c0"/><rect x="11" y="13" width="3" height="3" fill="#eee" stroke="#333" stroke-width=".6"/></svg>
<svg style="left:1860px;top:200px" width="16" height="16"><rect width="16" height="16" fill="#ebe9d8"/><rect x="2" y="2" width="3" height="3" fill="#aef08a" stroke="#555" stroke-width="1"/><rect x="2" y="7" width="3" height="3" fill="#aef08a" stroke="#555" stroke-width="1"/><rect x="7" y="2" width="3" height="3" fill="#aef08a" stroke="#555" stroke-width="1"/><rect x="7" y="7" width="3" height="3" fill="#aef08a" stroke="#555" stroke-width="1"/><rect x="12" y="2" width="3" height="3" fill="#aef08a" stroke="#555" stroke-width="1"/><circle cx="12.5" cy="10" r="3.2" fill="#4b8fd0"/><circle cx="12.5" cy="10" r="1.8" fill="#444"/><rect x="11" y="13" width="3" height="3" fill="#eee" stroke="#333" stroke-width=".6"/></svg>
<div class="a" style="left:1859px;top:221px;width:19px;height:2px;background:#dfe2e6"></div>
<svg style="left:1860px;top:228px" width="16" height="16"><rect width="16" height="16" fill="#ebe9d8"/><path d="M2 9 C0 3 4 0 8 0 C13 0 16 4 14 10 L12 10 L4 12Z" fill="#f2541a"/><path d="M4 6 C4 3 12 3 12 6 V10 H4Z" fill="#ffe2c8"/><rect x="5" y="6" width="2" height="2" fill="#1a7a9a"/><rect x="9" y="6" width="2" height="2" fill="#1a7a9a"/><path d="M3 12 L6 9 L6 15 Z" fill="#1a6ad8"/><rect x="6" y="11" width="4" height="2" fill="#1a6ad8"/><rect x="10" y="11" width="3" height="2" fill="#e8101a"/><path d="M13 9 L16 12 L13 15 Z" fill="#e8101a"/></svg>
<svg style="left:1860px;top:250px" width="16" height="16"><rect width="16" height="16" fill="#ebe9d8"/><rect x="1.5" y="3.5" width="6" height="4" fill="none" stroke="#000" stroke-width="1.1"/><rect x="4" y="1" width="1.1" height="10" fill="#000"/><path d="M13 2 H10 V8 H13 M10 5 H12.5" fill="none" stroke="#999" stroke-width="1"/><path d="M3 12 L6 9 L6 15 Z" fill="#1a6ad8"/><rect x="6" y="11" width="4" height="2" fill="#1a6ad8"/><rect x="10" y="11" width="3" height="2" fill="#e8101a"/><path d="M13 9 L16 12 L13 15 Z" fill="#e8101a"/></svg>
<svg style="left:1860px;top:272px" width="16" height="16"><rect width="16" height="16" fill="#ebe9d8"/><path d="M1.5 5 V2.5 H6.5 V5 M4 2.5 V5 M9.5 5 V2.5 H14.5 V5 M12 2.5 V5" fill="none" stroke="#555" stroke-width="1"/><path d="M7 4 H9 V7 H11 L8 10 L5 7 H7Z" fill="#e8101a"/><path d="M4.5 11.5 H1.5 V14.5 H4.5" fill="none" stroke="#000" stroke-width="1.5"/><path d="M9 15 V11.5 H15 V15 M12 11.5 V15" fill="none" stroke="#000" stroke-width="1.5"/></svg>
<svg style="left:1860px;top:294px" width="16" height="16"><rect width="16" height="16" fill="#ebe9d8"/><rect x="0" y="0" width="16" height="2" fill="#1e4f8f"/><rect x="7.5" y="4.5" width="7" height="11" fill="#fff" stroke="#0f2f60" stroke-width="1.2"/><path d="M9 7.5 H13 M9 9.5 H13 M9 11.5 H13 M9 13.5 H13" stroke="#2b6cb8" stroke-width="1"/><path d="M5 12 C5 10 4 9 2 9 M2 9 L3.5 7.5 M2 9 L3.5 10.5" fill="none" stroke="#2a7ad8" stroke-width="1.2"/></svg>
<div class="a" style="left:1859px;top:315px;width:19px;height:2px;background:#dfe2e6"></div>
<svg style="left:1860px;top:322px" width="16" height="16"><rect width="16" height="16" fill="#ebe9d8"/><rect x="1.5" y="1.5" width="13" height="8" fill="#fff" stroke="#333" stroke-width="1"/><path d="M3.5 8 V4 L5 2.5 L6.5 4 V8 M3.5 6 H6.5 M8 3 H12 V5 L8 8 H12" fill="none" stroke="#e8101a" stroke-width="1.3"/><rect x="0" y="11" width="16" height="5" fill="#5ab8ef"/><rect x="0" y="15" width="16" height="1" fill="#1a5a9a"/><path d="M2.5 11 V13 M5.5 11 V13 M8.5 11 V13 M11.5 11 V13 M14.5 11 V13" stroke="#fff" stroke-width="1"/></svg>
<svg style="left:1860px;top:344px" width="16" height="16"><rect width="16" height="16" fill="#ebe9d8"/><rect x="2.5" y="2.5" width="12" height="10" fill="#8fd0f5" stroke="#333" stroke-width="1"/><path d="M4.5 9 V5 L6 3.5 L7.5 5 V9 M4.5 7 H7.5 M9 4 H13 V6 L9 9 H13" fill="none" stroke="#1a3a70" stroke-width="1.3"/><rect x="8" y="10" width="6" height="1.5" fill="#fff"/><rect x="0.5" y="11.5" width="3" height="3" fill="#fff" stroke="#000" stroke-width="1"/></svg>
<div class="a" style="left:1859px;top:365px;width:19px;height:2px;background:#dfe2e6"></div>
<svg style="left:1860px;top:372px" width="16" height="16"><rect width="16" height="16" fill="#fff"/><rect x="0" y="0" width="16" height="16" fill="#1f4f8a"/><path d="M0 0 H16 L0 10Z" fill="#5a8ac8"/><path d="M9 5 C9 2 15 2 15 5 C15 7 12 7 12 9 V10" fill="none" stroke="#fff" stroke-width="2"/><rect x="11" y="12" width="2" height="2" fill="#fff"/><path d="M1 9 L2.5 12 L4 9 M2.5 12 V14 M8 10 H5.5 V12 H8 V15" fill="none" stroke="#fff" stroke-width="1.1"/></svg>
<svg style="left:1860px;top:394px" width="16" height="16"><rect x="0.5" y="0.5" width="15" height="15" fill="#fff" stroke="#c8d4e8" stroke-width="1"/><rect x="1.5" y="1.5" width="13" height="13" fill="#2a4f90"/><rect x="3" y="3" width="10" height="6" fill="#dfeaf8"/><path d="M4.5 5 H11.5 M4.5 7 H11.5" stroke="#9ab" stroke-width="1"/><path d="M2 10 L3.5 14 L5 10 M9 11.5 H6.5 V14 H9 M6.5 12.5 H8.5 M10.5 14 V11 H13" fill="none" stroke="#fff" stroke-width="1"/></svg>
<svg style="left:1860px;top:416px" width="16" height="16"><rect width="16" height="16" fill="#cfe6f8"/><path d="M1 8 L8 2 L15 8" fill="none" stroke="#d94a1a" stroke-width="2"/><path d="M3 8 L8 4 L13 8 V15 H3Z" fill="#fff"/><rect x="5" y="10" width="3" height="5" fill="#8a4a20"/><circle cx="12" cy="11" r="3.3" fill="#52b83a"/><circle cx="12" cy="11" r="1.5" fill="#a8e078"/></svg>
<svg style="left:1860px;top:438px" width="16" height="16"><rect width="16" height="16" fill="#f0f0f0"/><path d="M1 1 H7 V7 H1Z M2 2.5 H6 M4 1 V7 M2 4.5 H6 M1 9 H7 V15 H1Z M2 11 H6 M2 13 H6" fill="#1e4f8f" stroke="#fff" stroke-width=".5"/><path d="M9 1 H15 V7 H9Z" fill="#3a6fb0"/><path d="M10 3 H14 M12 1.5 V6.5" stroke="#fff" stroke-width=".8"/><path d="M9 9 H15 V15 H9Z" fill="#e01818"/><path d="M10 11 H14 M10 13 H14 M12 9.5 V14.5" stroke="#fff" stroke-width=".8"/></svg>
<div class="a" style="left:1884px;top:144px;width:25px;height:478px;border:1px solid #2a303a;background:#3b4453"></div>
<svg style="left:1884px;top:144px" width="25" height="8"><rect x="4" y="3" width="1" height="1" fill="#d0d4da"/><rect x="4" y="5" width="1" height="1" fill="#d0d4da"/><rect x="6" y="3" width="1" height="1" fill="#d0d4da"/><rect x="6" y="5" width="1" height="1" fill="#d0d4da"/><rect x="8" y="3" width="1" height="1" fill="#d0d4da"/><rect x="8" y="5" width="1" height="1" fill="#d0d4da"/><rect x="10" y="3" width="1" height="1" fill="#d0d4da"/><rect x="10" y="5" width="1" height="1" fill="#d0d4da"/><rect x="12" y="3" width="1" height="1" fill="#d0d4da"/><rect x="12" y="5" width="1" height="1" fill="#d0d4da"/><rect x="14" y="3" width="1" height="1" fill="#d0d4da"/><rect x="14" y="5" width="1" height="1" fill="#d0d4da"/><rect x="16" y="3" width="1" height="1" fill="#d0d4da"/><rect x="16" y="5" width="1" height="1" fill="#d0d4da"/></svg>
<svg style="left:1888px;top:156px" width="16" height="16"><rect width="16" height="16" fill="#ebe9d8"/><path d="M5 4 C5 2 6 1.5 8 1.5 H11 C13 1.5 14 2 14 4 V7 H5Z" fill="#fff" stroke="#111" stroke-width="1"/><rect x="4.5" y="5.5" width="10" height="3" fill="#ddd" stroke="#111" stroke-width="1"/><rect x="6.5" y="7.5" width="6" height="2" fill="#fff" stroke="#111" stroke-width="1"/><path d="M2.5 13 V7.5 H8.5 M6.5 13 V9.5 M11.5 13 V10.5" fill="none" stroke="#1a1a1a" stroke-width="1"/><circle cx="2.5" cy="13" r="1.5" fill="#fff" stroke="#111" stroke-width="1"/><circle cx="6.5" cy="13" r="1.5" fill="#fff" stroke="#111" stroke-width="1"/><circle cx="11" cy="13" r="1.5" fill="#fff" stroke="#111" stroke-width="1"/><rect x="12" y="13" width="4" height="1" fill="#111"/></svg>
<div class="a" style="left:1887px;top:177px;width:19px;height:2px;background:#dfe2e6"></div>
<svg style="left:1888px;top:184px" width="16" height="16"><rect width="16" height="16" fill="#ebe9d8"/><rect x="9.5" y="0.5" width="5" height="8" fill="#e8e8e8" stroke="#222" stroke-width="1"/><path d="M11 2.5 H13 M11 4.5 H13 M11 6.5 H13" stroke="#555" stroke-width="1" stroke-dasharray="1 1"/><path d="M2.5 13 V7.5 H8.5 M6.5 13 V9.5 M11.5 13 V10.5" fill="none" stroke="#1a1a1a" stroke-width="1"/><circle cx="2.5" cy="13" r="1.5" fill="#fff" stroke="#111" stroke-width="1"/><circle cx="6.5" cy="13" r="1.5" fill="#fff" stroke="#111" stroke-width="1"/><circle cx="11" cy="13" r="1.5" fill="#fff" stroke="#111" stroke-width="1"/><rect x="12" y="13" width="4" height="1" fill="#111"/></svg>
<svg style="left:1888px;top:206px" width="16" height="16"><rect width="16" height="16" fill="#ebe9d8"/><rect x="9.5" y="1.5" width="5" height="7" fill="#e0e0e0" stroke="#222" stroke-width="1"/><rect x="10.5" y="1.5" width="3" height="2.5" fill="#fff" stroke="#222" stroke-width=".8"/><path d="M2.5 13 V7.5 H8.5 M6.5 13 V9.5 M11.5 13 V10.5" fill="none" stroke="#1a1a1a" stroke-width="1"/><circle cx="2.5" cy="13" r="1.5" fill="#fff" stroke="#111" stroke-width="1"/><circle cx="6.5" cy="13" r="1.5" fill="#fff" stroke="#111" stroke-width="1"/><circle cx="11" cy="13" r="1.5" fill="#fff" stroke="#111" stroke-width="1"/><rect x="12" y="13" width="4" height="1" fill="#111"/></svg>
<svg style="left:1888px;top:228px" width="16" height="16"><rect width="16" height="16" fill="#ebe9d8"/><rect x="3" y="5" width="12" height="7" fill="#fff"/><path d="M2.5 12 V5.5 H8.5 V12 M8.5 7.5 H14.5 V12" fill="none" stroke="#1a1a1a" stroke-width="1"/><circle cx="2.5" cy="13" r="1.5" fill="#fff" stroke="#111" stroke-width="1"/><circle cx="8" cy="13" r="1.5" fill="#fff" stroke="#111" stroke-width="1"/><circle cx="13" cy="13" r="1.5" fill="#fff" stroke="#111" stroke-width="1"/></svg>
<div class="a" style="left:1887px;top:249px;width:19px;height:2px;background:#dfe2e6"></div>
<svg style="left:1888px;top:256px" width="16" height="16"><rect width="16" height="16" fill="#ebe9d8"/><ellipse cx="7" cy="6" rx="5.5" ry="1.7" fill="none" stroke="#333" stroke-width=".8"/><ellipse cx="7" cy="8.8" rx="5.5" ry="1.7" fill="none" stroke="#333" stroke-width=".8"/><ellipse cx="7" cy="11.6" rx="5.5" ry="1.7" fill="none" stroke="#333" stroke-width=".8"/><ellipse cx="7" cy="14.4" rx="5.5" ry="1.7" fill="none" stroke="#333" stroke-width=".8"/><path d="M9 4 C9 1.5 12 1 12.5 2.5 M12.5 2.5 L11 1.5 M12.5 2.5 L13.5 1" fill="none" stroke="#1a5fb0" stroke-width="1.1"/><ellipse cx="14.5" cy="3.5" rx="1.2" ry="2.3" fill="none" stroke="#e00" stroke-width="1"/></svg>
<svg style="left:1888px;top:278px" width="16" height="16"><rect width="16" height="16" fill="#ebe9d8"/><ellipse cx="7" cy="4" rx="5.5" ry="2" fill="none" stroke="#222" stroke-width=".9" stroke-dasharray="2 1"/><circle cx="12.5" cy="10" r="3.2" fill="#4b8fd0"/><circle cx="12.5" cy="10" r="1.8" fill="#444"/><rect x="11" y="13" width="3" height="3" fill="#eee" stroke="#333" stroke-width=".6"/></svg>
<svg style="left:1888px;top:300px" width="16" height="16"><rect width="16" height="16" fill="#ebe9d8"/><ellipse cx="7" cy="3" rx="5.5" ry="1.7" fill="none" stroke="#333" stroke-width=".8"/><ellipse cx="7" cy="5.8" rx="5.5" ry="1.7" fill="none" stroke="#333" stroke-width=".8"/><ellipse cx="7" cy="8.6" rx="5.5" ry="1.7" fill="none" stroke="#333" stroke-width=".8"/><ellipse cx="7" cy="11" rx="5.5" ry="2" fill="#9cc4ea"/><circle cx="12.5" cy="10" r="3.2" fill="#4b8fd0"/><circle cx="12.5" cy="10" r="1.8" fill="#444"/><rect x="11" y="13" width="3" height="3" fill="#eee" stroke="#333" stroke-width=".6"/></svg>
<svg style="left:1888px;top:322px" width="16" height="16"><rect width="16" height="16" fill="#ebe9d8"/><ellipse cx="7" cy="3" rx="5.5" ry="1.7" fill="none" stroke="#333" stroke-width=".8"/><ellipse cx="7" cy="5.8" rx="5.5" ry="1.7" fill="none" stroke="#333" stroke-width=".8"/><ellipse cx="7" cy="8.6" rx="5.5" ry="1.7" fill="none" stroke="#333" stroke-width=".8"/><ellipse cx="7" cy="11.4" rx="5.5" ry="1.7" fill="none" stroke="#333" stroke-width=".8"/><circle cx="12.5" cy="10" r="3.2" fill="#f7a21a"/><circle cx="12.5" cy="9.6" r="1.6" fill="#fff3b0"/><rect x="11" y="13" width="3" height="3" fill="#eee" stroke="#333" stroke-width=".6"/></svg>
<svg style="left:1888px;top:344px" width="16" height="16"><rect width="16" height="16" fill="#ebe9d8"/><ellipse cx="7" cy="3" rx="5.5" ry="1.7" fill="none" stroke="#333" stroke-width=".8"/><ellipse cx="7" cy="5.8" rx="5.5" ry="1.7" fill="none" stroke="#333" stroke-width=".8"/><ellipse cx="7" cy="8.6" rx="5.5" ry="1.7" fill="none" stroke="#333" stroke-width=".8"/><ellipse cx="7" cy="11.4" rx="5.5" ry="1.7" fill="none" stroke="#333" stroke-width=".8"/><circle cx="9" cy="10" r="3.2" fill="#f7a21a"/><circle cx="9" cy="9.6" r="1.6" fill="#fff3b0"/><rect x="7.5" y="13" width="3" height="3" fill="#eee" stroke="#333" stroke-width=".6"/><circle cx="13.2" cy="10" r="3.2" fill="#f7a21a"/><circle cx="13.2" cy="9.6" r="1.6" fill="#fff3b0"/><rect x="11.7" y="13" width="3" height="3" fill="#eee" stroke="#333" stroke-width=".6"/></svg>
<div class="a" style="left:1887px;top:365px;width:19px;height:2px;background:#dfe2e6"></div>
<svg style="left:1888px;top:372px" width="16" height="16"><rect width="16" height="16" fill="#ebe9d8"/><path d="M1.5 1 V15.5 H10" fill="none" stroke="#2a5fb0" stroke-width="1" stroke-dasharray="1 1"/><path d="M1 1.5 H10 M9.5 1 V15" fill="none" stroke="#2a5fb0" stroke-width="1" stroke-dasharray="1 1"/><rect x="3.5" y="3.5" width="4" height="4" fill="#f3e48c" stroke="#111" stroke-width="1"/><circle cx="5.5" cy="11" r="2.4" fill="#cfe8f8" stroke="#111" stroke-width="1"/><path d="M10 7 L14 11 M14 7 L10 11" stroke="#f07818" stroke-width="1.3"/><path d="M12 9 L16 3" stroke="#c87a3a" stroke-width="1"/><rect x="13" y="6" width="1" height="1" fill="#f3d34a"/></svg>
<svg style="left:1888px;top:394px" width="16" height="16"><rect width="16" height="16" fill="#ebe9d8"/><path d="M1.5 1 V15.5 H10" fill="none" stroke="#2a5fb0" stroke-width="1" stroke-dasharray="1 1"/><path d="M1 1.5 H10 M9.5 1 V15" fill="none" stroke="#2a5fb0" stroke-width="1" stroke-dasharray="1 1"/><rect x="3.5" y="3.5" width="4" height="4" fill="#f3e48c" stroke="#111" stroke-width="1"/><circle cx="5.5" cy="11" r="2.4" fill="#cfe8f8" stroke="#111" stroke-width="1"/><path d="M9 12 L13 8 L15 10 L11 14Z" fill="#d01818" stroke="#111" stroke-width=".6"/><rect x="12" y="10" width="1.5" height="1.5" fill="#fff"/><path d="M12 3 V4 M14 2 V3 M15 5 H16" stroke="#d01818" stroke-width="1"/></svg>
<svg style="left:1888px;top:416px" width="16" height="16"><rect width="16" height="16" fill="#ebe9d8"/><path d="M1.5 1 V15.5 H10" fill="none" stroke="#2a5fb0" stroke-width="1" stroke-dasharray="1 1"/><path d="M1 1.5 H10 M9.5 1 V15" fill="none" stroke="#2a5fb0" stroke-width="1" stroke-dasharray="1 1"/><rect x="3.5" y="3.5" width="4" height="4" fill="#f3e48c" stroke="#111" stroke-width="1"/><circle cx="5.5" cy="11" r="2.4" fill="#cfe8f8" stroke="#111" stroke-width="1"/><circle cx="13" cy="3.5" r="2.2" fill="#d0e5f5" stroke="#888" stroke-width=".8"/><path d="M14 8 V11 H10.5 M12 9.5 L10.5 11 L12 12.5" stroke="#e11" stroke-width="1.6" fill="none"/></svg>
<svg style="left:1888px;top:438px" width="16" height="16"><rect width="16" height="16" fill="#ebe9d8"/><path d="M1.5 1 V15.5 H10" fill="none" stroke="#2a5fb0" stroke-width="1" stroke-dasharray="1 1"/><path d="M1 1.5 H10 M9.5 1 V15" fill="none" stroke="#2a5fb0" stroke-width="1" stroke-dasharray="1 1"/><rect x="3.5" y="3.5" width="4" height="4" fill="#f3e48c" stroke="#111" stroke-width="1"/><circle cx="5.5" cy="11" r="2.4" fill="#cfe8f8" stroke="#111" stroke-width="1"/><path d="M8 12 L14 3 L16.5 5.5 L10 14.5Z" fill="#f2aab0"/><path d="M10 10 L15 4 L16 5 L11 11Z" fill="#5ab8c8"/><path d="M14 3 L15.5 1 L17 2.5 L16.5 5.5Z" fill="#f3c33a"/><rect x="11" y="14" width="4" height="1.5" fill="#e11"/></svg>
<svg style="left:1888px;top:460px" width="16" height="16"><rect width="16" height="16" fill="#ebe9d8"/><path d="M1.5 1 V15.5 H10" fill="none" stroke="#2a5fb0" stroke-width="1" stroke-dasharray="1 1"/><path d="M1 1.5 H10 M9.5 1 V15" fill="none" stroke="#2a5fb0" stroke-width="1" stroke-dasharray="1 1"/><rect x="3.5" y="3.5" width="4" height="4" fill="#f3e48c" stroke="#111" stroke-width="1"/><circle cx="5.5" cy="11" r="2.4" fill="#cfe8f8" stroke="#111" stroke-width="1"/><circle cx="13" cy="3.5" r="2.2" fill="#d0e5f5" stroke="#888" stroke-width=".8"/><path d="M11 14 H13 V9.5 M11.2 11.5 L13 9.5 L14.8 11.5" stroke="#e11" stroke-width="1.6" fill="none"/></svg>
<svg style="left:1888px;top:482px" width="16" height="16"><rect width="16" height="16" fill="#ebe9d8"/><path d="M1.5 1 V15.5 H10" fill="none" stroke="#2a5fb0" stroke-width="1" stroke-dasharray="1 1"/><path d="M1 1.5 H10 M9.5 1 V15" fill="none" stroke="#2a5fb0" stroke-width="1" stroke-dasharray="1 1"/><rect x="3.5" y="3.5" width="4" height="4" fill="#f3e48c" stroke="#111" stroke-width="1"/><circle cx="5.5" cy="11" r="2.4" fill="#cfe8f8" stroke="#111" stroke-width="1"/><rect x="12" y="3" width="1" height="8" fill="#a06010"/><path d="M10 16 L11 12 H14 L15 16Z" fill="#f0a020"/><path d="M11 14 H14" stroke="#c07010" stroke-width="1"/></svg>
<div class="a" style="left:1887px;top:503px;width:19px;height:2px;background:#dfe2e6"></div>
<svg style="left:1888px;top:510px" width="16" height="16"><rect width="16" height="16" fill="#fafafa"/><path d="M1 4 H5 V2 L8 5 L5 8 V6 H1Z" fill="#8ab0d8"/><path d="M8 4 H12 V2 L15 5 L12 8 V6 H8Z" fill="#3a78c0"/><path d="M0 11 H2 V9 L4.5 11.5 L2 14 V12 H0Z" fill="#e11"/><path d="M5 9 L7 12 L9 9 M7 12 V15 M11.5 9 H13.5 C14.5 9 15 10 15 12 C15 14 14.5 15 13 15 H11.5 C10.5 15 10 14 10 12 C10 10 10.5 9 11.5 9Z M13 14 L15.5 16" fill="none" stroke="#1c3f7a" stroke-width="1.2"/></svg>
<svg style="left:1888px;top:532px" width="16" height="16"><rect width="16" height="16" fill="#ebe9d8"/><rect x="3.5" y="2.5" width="10" height="12" rx="1" fill="#fff" stroke="#222" stroke-width="1"/><rect x="6.5" y="1" width="4" height="2.5" fill="#fff" stroke="#222" stroke-width="1"/><path d="M7 6.5 H12 M8 8.5 H12 M9 10.5 H12 M10 12.5 H12" stroke="#2b6cb8" stroke-width="1"/><rect x="0" y="11" width="10" height="5" fill="#fff"/><path d="M0.5 11.5 L3.5 15.5 M3.5 11.5 L0.5 15.5 M5.5 11.5 L7 13.5 L8.5 11.5 M7 13.5 V15.5" stroke="#000" stroke-width="1"/><rect x="4" y="14.5" width="1" height="1" fill="#000"/></svg>
<svg style="left:1888px;top:554px" width="16" height="16"><rect width="16" height="16" fill="#ebe9d8"/><circle cx="8.5" cy="7.5" r="6.5" fill="#3d84d0"/><circle cx="7" cy="5" r="3" fill="#7ab8f0"/><path d="M4 7 C6 5 8 8 11 7 L12 11 C9 12 6 10 4 11Z" fill="#3aa84a"/><path d="M0 3 H4 L8 5 M8 5 L6 3 M8 5 L5 6" stroke="#e11" stroke-width="1.3" fill="none"/><rect x="2" y="10" width="14" height="6" fill="#fff"/><path d="M3 10.5 V15.5 M3 13 L5.5 10.5 M3 13 L5.5 15.5 M7 15.5 V12 H11 V15.5 M9 12 V15.5 M13 10 V15.5 H15" fill="none" stroke="#e01010" stroke-width="1.3"/></svg>
<div class="a" style="left:1887px;top:575px;width:19px;height:2px;background:#dfe2e6"></div>
<svg style="left:1888px;top:582px" width="16" height="16"><rect width="16" height="16" fill="#ebe9d8"/><circle cx="6" cy="7" r="5" fill="#fff" stroke="#333" stroke-width="1.2"/><path d="M9.5 10.5 L15 16" stroke="#444" stroke-width="2.2"/><rect x="3" y="2" width="13" height="7" fill="#e11"/><path d="M7 3.5 H4.5 V7.5 H7 M8.5 3.5 H10.5 V7.5 H8.5Z M12 7.5 V4 H15.5 V7.5 M13.7 4 V7.5" fill="none" stroke="#fff" stroke-width="1"/></svg>
<svg style="left:1888px;top:604px" width="16" height="16"><rect width="16" height="16" fill="#ebe9d8"/><path d="M7 0 L1 8 H5 L2 14 L10 5 H6 L9 0Z" fill="#f0d020" stroke="#222" stroke-width=".8"/><path d="M10 13 C8 13 8 8 11.5 8 C15 8 15 13 13 13 M12.5 11.5 L15.5 16" fill="none" stroke="#e00" stroke-width="1.5"/></svg>
<div class="a" style="left:1884px;top:624px;width:25px;height:334px;border:1px solid #2a303a;background:#3b4453"></div>
<svg style="left:1884px;top:624px" width="25" height="8"><rect x="4" y="3" width="1" height="1" fill="#d0d4da"/><rect x="4" y="5" width="1" height="1" fill="#d0d4da"/><rect x="6" y="3" width="1" height="1" fill="#d0d4da"/><rect x="6" y="5" width="1" height="1" fill="#d0d4da"/><rect x="8" y="3" width="1" height="1" fill="#d0d4da"/><rect x="8" y="5" width="1" height="1" fill="#d0d4da"/><rect x="10" y="3" width="1" height="1" fill="#d0d4da"/><rect x="10" y="5" width="1" height="1" fill="#d0d4da"/><rect x="12" y="3" width="1" height="1" fill="#d0d4da"/><rect x="12" y="5" width="1" height="1" fill="#d0d4da"/><rect x="14" y="3" width="1" height="1" fill="#d0d4da"/><rect x="14" y="5" width="1" height="1" fill="#d0d4da"/><rect x="16" y="3" width="1" height="1" fill="#d0d4da"/><rect x="16" y="5" width="1" height="1" fill="#d0d4da"/></svg>
<svg style="left:1888px;top:636px" width="16" height="16"><rect width="16" height="16" fill="#ebe9d8"/><rect x="0" y="0" width="16" height="3" fill="#2a6cc0"/><rect x="1" y="1" width="3" height="1" fill="#fff"/><rect x="5" y="0.5" width="5" height="1" fill="#fff"/><rect x="5" y="2" width="5" height="1" fill="#fff"/><rect x="0" y="9" width="2" height="5" fill="#2a6cc0"/><path d="M1 9.5 H5 C7 9.5 8 11 8 13" stroke="#2a6cc0" fill="none" stroke-width="1"/><path d="M4 13 L9 9 L13 12 L9 16 Z" fill="#c4600f"/><path d="M5 13 L9 10 L11 12 L8 15Z" fill="#e07a20"/><path d="M10 9 L15 5 L16 8 L12 12Z" fill="#fff"/><rect x="11" y="8" width="1" height="1" fill="#d02020"/><rect x="13" y="7" width="1" height="1" fill="#d02020"/><rect x="12" y="10" width="1" height="1" fill="#d02020"/><rect x="14" y="9" width="1" height="1" fill="#d02020"/><rect x="15" y="6" width="1" height="1" fill="#d02020"/></svg>
<svg style="left:1888px;top:658px" width="16" height="16"><rect width="16" height="16" fill="#ebe9d8"/><path d="M1.5 13 V6.5 H7" stroke="#111" fill="none"/><rect x="0.5" y="12.5" width="2.5" height="2.5" fill="#fff" stroke="#111" stroke-width="1"/><path d="M3 8 H12 C14 8 15 9 15 11 C15 13 14 14 12 14 H3" fill="#fff" stroke="#555" stroke-width=".8"/><path d="M5 11 H13 M11 9 L13 11 L11 13" stroke="#e11" stroke-width="1.3" fill="none"/><path d="M8 6 L5 3 L10 0 L12 3Z" fill="#c4600f"/><path d="M10 2 L14 0 L16 2 L12 5Z" fill="#fff"/><rect x="12" y="1" width="1" height="1" fill="#d02020"/><rect x="14" y="2" width="1" height="1" fill="#d02020"/></svg>
<svg style="left:1888px;top:680px" width="16" height="16"><rect width="16" height="16" fill="#ebe9d8"/><path d="M0.5 12 L4 2 H6 L9.5 12 M2 8.5 H8" fill="none" stroke="#2c5a7a" stroke-width="2"/><path d="M10.5 1 V9 M13 1 V9 M10.5 5 H13" stroke="#9aa" stroke-width="1"/><path d="M4 13 L9 9 L13 12 L9 16 Z" fill="#c4600f"/><path d="M5 13 L9 10 L11 12 L8 15Z" fill="#e07a20"/><path d="M10 9 L15 5 L16 8 L12 12Z" fill="#fff"/><rect x="11" y="8" width="1" height="1" fill="#d02020"/><rect x="13" y="7" width="1" height="1" fill="#d02020"/><rect x="12" y="10" width="1" height="1" fill="#d02020"/><rect x="14" y="9" width="1" height="1" fill="#d02020"/><rect x="15" y="6" width="1" height="1" fill="#d02020"/></svg>
<div class="a" style="left:1887px;top:701px;width:19px;height:2px;background:#dfe2e6"></div>
<svg style="left:1888px;top:708px" width="16" height="16"><rect width="16" height="16" fill="#ebe9d8"/><path d="M2 4 L6 1 H14 L10 4Z M2 7 L6 4 H14 L10 7Z M2 10 L6 7 H13 L9 10Z" fill="#fff" stroke="#333" stroke-width=".7"/><path d="M4 13 L9 9 L13 12 L9 16 Z" fill="#c4600f"/><path d="M5 13 L9 10 L11 12 L8 15Z" fill="#e07a20"/><path d="M10 9 L15 5 L16 8 L12 12Z" fill="#fff"/><rect x="11" y="8" width="1" height="1" fill="#d02020"/><rect x="13" y="7" width="1" height="1" fill="#d02020"/><rect x="12" y="10" width="1" height="1" fill="#d02020"/><rect x="14" y="9" width="1" height="1" fill="#d02020"/><rect x="15" y="6" width="1" height="1" fill="#d02020"/></svg>
<svg style="left:1888px;top:730px" width="16" height="16"><rect width="16" height="16" fill="#ebe9d8"/><rect x="0" y="1" width="2" height="5" fill="#f0f"/><rect x="2" y="1" width="2" height="5" fill="#60f"/><rect x="4" y="1" width="2" height="5" fill="#00f"/><rect x="6" y="1" width="2" height="5" fill="#0cc"/><rect x="8" y="1" width="2" height="5" fill="#0c0"/><rect x="10" y="1" width="2" height="5" fill="#ee0"/><rect x="12" y="1" width="2" height="5" fill="#f80"/><rect x="14" y="1" width="2" height="5" fill="#f30"/><path d="M4 13 L9 9 L13 12 L9 16 Z" fill="#c4600f"/><path d="M5 13 L9 10 L11 12 L8 15Z" fill="#e07a20"/><path d="M10 9 L15 5 L16 8 L12 12Z" fill="#fff"/><rect x="11" y="8" width="1" height="1" fill="#d02020"/><rect x="13" y="7" width="1" height="1" fill="#d02020"/><rect x="12" y="10" width="1" height="1" fill="#d02020"/><rect x="14" y="9" width="1" height="1" fill="#d02020"/><rect x="15" y="6" width="1" height="1" fill="#d02020"/></svg>
<svg style="left:1888px;top:752px" width="16" height="16"><rect width="16" height="16" fill="#ebe9d8"/><rect x="0" y="0" width="3" height="3" fill="#f0f"/><rect x="3" y="0" width="3" height="3" fill="#00f"/><rect x="6" y="0" width="3" height="3" fill="#0c0"/><rect x="9" y="0" width="3" height="3" fill="#ee0"/><rect x="12" y="0" width="4" height="3" fill="#f60"/><path d="M2 6 L6 3 H14 L10 6Z M2 9 L6 6 H13 L9 9Z" fill="#fff" stroke="#333" stroke-width=".7"/><path d="M4 13 L9 9 L13 12 L9 16 Z" fill="#c4600f"/><path d="M5 13 L9 10 L11 12 L8 15Z" fill="#e07a20"/><path d="M10 9 L15 5 L16 8 L12 12Z" fill="#fff"/><rect x="11" y="8" width="1" height="1" fill="#d02020"/><rect x="13" y="7" width="1" height="1" fill="#d02020"/><rect x="12" y="10" width="1" height="1" fill="#d02020"/><rect x="14" y="9" width="1" height="1" fill="#d02020"/><rect x="15" y="6" width="1" height="1" fill="#d02020"/></svg>
<svg style="left:1888px;top:774px" width="16" height="16"><rect width="16" height="16" fill="#ebe9d8"/><rect x="0.5" y="0.5" width="8" height="15" fill="#fff" stroke="#1c4f9a" stroke-width="1.2"/><rect x="2.5" y="2.5" width="4" height="4" fill="#9cc4ea" stroke="#1c4f9a" stroke-width="1"/><rect x="2.5" y="9" width="4" height="4" fill="#fff" stroke="#1c4f9a" stroke-width="1"/><path d="M4 13 L9 9 L13 12 L9 16 Z" fill="#c4600f"/><path d="M5 13 L9 10 L11 12 L8 15Z" fill="#e07a20"/><path d="M10 9 L15 5 L16 8 L12 12Z" fill="#fff"/><rect x="11" y="8" width="1" height="1" fill="#d02020"/><rect x="13" y="7" width="1" height="1" fill="#d02020"/><rect x="12" y="10" width="1" height="1" fill="#d02020"/><rect x="14" y="9" width="1" height="1" fill="#d02020"/><rect x="15" y="6" width="1" height="1" fill="#d02020"/></svg>
<div class="a" style="left:1887px;top:795px;width:19px;height:2px;background:#dfe2e6"></div>
<svg style="left:1888px;top:802px" width="16" height="16"><rect width="16" height="16" fill="#ebe9d8"/><path d="M0.5 11 L3.5 2 H5 L8 11 M1.7 7.5 H6.8" fill="none" stroke="#444" stroke-width="1.6"/><path d="M9 1 H12.5 C14.5 1 14.5 5 12.5 5 H9 V1 M9 5 H13 C15.5 5 15.5 9.5 13 9.5 H9Z" fill="none" stroke="#2b6ad8" stroke-width="1.6"/><path d="M4 13 L9 9 L13 12 L9 16 Z" fill="#c4600f"/><path d="M5 13 L9 10 L11 12 L8 15Z" fill="#e07a20"/><path d="M10 9 L15 5 L16 8 L12 12Z" fill="#fff"/><rect x="11" y="8" width="1" height="1" fill="#d02020"/><rect x="13" y="7" width="1" height="1" fill="#d02020"/><rect x="12" y="10" width="1" height="1" fill="#d02020"/><rect x="14" y="9" width="1" height="1" fill="#d02020"/><rect x="15" y="6" width="1" height="1" fill="#d02020"/></svg>
<svg style="left:1888px;top:824px" width="16" height="16"><path d="M3 13 C0 13 0 9 2 8 C0 5 3 2 6 3 C7 0 12 0 13 3 C16 3 16 8 14 9 C16 12 13 15 10 14 C8 16 4 16 3 13Z" fill="#f2f2f2" stroke="#c8c8c8" stroke-width=".7"/><path d="M6 6 C6 3 11 3 11 6 C11 8 8.5 8 8.5 10" fill="none" stroke="#1c3f7a" stroke-width="1.6"/><rect x="7.5" y="11" width="2" height="2" fill="#1c3f7a"/></svg>
<svg style="left:1888px;top:846px" width="16" height="16"><rect width="16" height="16" fill="#ebe9d8"/><path d="M0.5 12 L4 2 H5.5 L9 12 M1.8 8.5 H7.5" fill="none" stroke="#444" stroke-width="1.7"/><path d="M14 2 H11.5 V4 H14 V6 H11.5" fill="none" stroke="#1c4f7a" stroke-width="1.1"/><path d="M4 13 L9 9 L13 12 L9 16 Z" fill="#c4600f"/><path d="M5 13 L9 10 L11 12 L8 15Z" fill="#e07a20"/><path d="M10 9 L15 5 L16 8 L12 12Z" fill="#fff"/><rect x="11" y="8" width="1" height="1" fill="#d02020"/><rect x="13" y="7" width="1" height="1" fill="#d02020"/><rect x="12" y="10" width="1" height="1" fill="#d02020"/><rect x="14" y="9" width="1" height="1" fill="#d02020"/><rect x="15" y="6" width="1" height="1" fill="#d02020"/></svg>
<svg style="left:1888px;top:868px" width="16" height="16"><rect width="16" height="16" fill="#ebe9d8"/><path d="M0.5 12 L4 2 H5.5 L9 12 M1.8 8.5 H7.5" fill="none" stroke="#444" stroke-width="1.7"/><path d="M10.5 1.5 H12 M11.2 1.5 V10 M10.5 10 H12 M13.5 1 V7 M13.5 4 H15.5 V7" fill="none" stroke="#1c4f9a" stroke-width="1"/><path d="M4 13 L9 9 L13 12 L9 16 Z" fill="#c4600f"/><path d="M5 13 L9 10 L11 12 L8 15Z" fill="#e07a20"/><path d="M10 9 L15 5 L16 8 L12 12Z" fill="#fff"/><rect x="11" y="8" width="1" height="1" fill="#d02020"/><rect x="13" y="7" width="1" height="1" fill="#d02020"/><rect x="12" y="10" width="1" height="1" fill="#d02020"/><rect x="14" y="9" width="1" height="1" fill="#d02020"/><rect x="15" y="6" width="1" height="1" fill="#d02020"/></svg>
<div class="a" style="left:1887px;top:889px;width:19px;height:2px;background:#dfe2e6"></div>
<svg style="left:1888px;top:896px" width="16" height="16"><rect width="16" height="16" fill="#ebe9d8"/><path d="M5 1.5 C2 1.5 1.5 2.5 1.5 4 C1.5 5.5 2 6 5 6" stroke="#111" fill="none" stroke-width="1.1"/><rect x="0" y="7" width="16" height="1" fill="#111"/><path d="M5 9.5 C2 9.5 1.5 10.5 1.5 12 C1.5 13.5 2 14.5 5 14.5" stroke="#111" fill="none" stroke-width="1.8"/><path d="M4 13 L9 9 L13 12 L9 16 Z" fill="#c4600f"/><path d="M5 13 L9 10 L11 12 L8 15Z" fill="#e07a20"/><path d="M10 9 L15 5 L16 8 L12 12Z" fill="#fff"/><rect x="11" y="8" width="1" height="1" fill="#d02020"/><rect x="13" y="7" width="1" height="1" fill="#d02020"/><rect x="12" y="10" width="1" height="1" fill="#d02020"/><rect x="14" y="9" width="1" height="1" fill="#d02020"/><rect x="15" y="6" width="1" height="1" fill="#d02020"/></svg>
<svg style="left:1888px;top:918px" width="16" height="16"><rect width="16" height="16" fill="#ebe9d8"/><rect x="1" y="2" width="14" height="1" fill="#111"/><path d="M1 5.5 H3 M4 5.5 H6 M7 5.5 H9 M10 5.5 H12 M13 5.5 H15" stroke="#111" stroke-width="1"/><rect x="1" y="8" width="14" height="1" fill="#111"/><path d="M4 13 L9 9 L13 12 L9 16 Z" fill="#c4600f"/><path d="M5 13 L9 10 L11 12 L8 15Z" fill="#e07a20"/><path d="M10 9 L15 5 L16 8 L12 12Z" fill="#fff"/><rect x="11" y="8" width="1" height="1" fill="#d02020"/><rect x="13" y="7" width="1" height="1" fill="#d02020"/><rect x="12" y="10" width="1" height="1" fill="#d02020"/><rect x="14" y="9" width="1" height="1" fill="#d02020"/><rect x="15" y="6" width="1" height="1" fill="#d02020"/></svg>
<svg style="left:1888px;top:940px" width="16" height="16"><rect width="16" height="16" fill="#ebe9d8"/><path d="M1.5 11 L5.5 3 V13 L1.5 15Z" fill="#fff" stroke="#333" stroke-width=".9"/><path d="M5.5 3 L9 1 V11 L5.5 13" fill="none" stroke="#111" stroke-width="1"/><path d="M10 1.5 H14 M12 1.5 V6" stroke="#e00" stroke-width="1.5"/><path d="M4 13 L9 9 L13 12 L9 16 Z" fill="#c4600f"/><path d="M5 13 L9 10 L11 12 L8 15Z" fill="#e07a20"/><path d="M10 9 L15 5 L16 8 L12 12Z" fill="#fff"/><rect x="11" y="8" width="1" height="1" fill="#d02020"/><rect x="13" y="7" width="1" height="1" fill="#d02020"/><rect x="12" y="10" width="1" height="1" fill="#d02020"/><rect x="14" y="9" width="1" height="1" fill="#d02020"/><rect x="15" y="6" width="1" height="1" fill="#d02020"/></svg>
<div class="a" style="left:1884px;top:960px;width:25px;height:35px;border:1px solid #2a303a;border-bottom:none;background:#3b4453;overflow:hidden"></div>
<svg style="left:1884px;top:960px" width="25" height="8"><rect x="4" y="3" width="1" height="1" fill="#d0d4da"/><rect x="4" y="5" width="1" height="1" fill="#d0d4da"/><rect x="6" y="3" width="1" height="1" fill="#d0d4da"/><rect x="6" y="5" width="1" height="1" fill="#d0d4da"/><rect x="8" y="3" width="1" height="1" fill="#d0d4da"/><rect x="8" y="5" width="1" height="1" fill="#d0d4da"/><rect x="10" y="3" width="1" height="1" fill="#d0d4da"/><rect x="10" y="5" width="1" height="1" fill="#d0d4da"/><rect x="12" y="3" width="1" height="1" fill="#d0d4da"/><rect x="12" y="5" width="1" height="1" fill="#d0d4da"/><rect x="14" y="3" width="1" height="1" fill="#d0d4da"/><rect x="14" y="5" width="1" height="1" fill="#d0d4da"/><rect x="16" y="3" width="1" height="1" fill="#d0d4da"/><rect x="16" y="5" width="1" height="1" fill="#d0d4da"/></svg>
<svg style="left:1888px;top:972px" width="16" height="16"><rect x="0" y="0" width="16" height="16" fill="#1c4f9a"/><rect x="1" y="1" width="4" height="3" fill="#cfe3f8"/><rect x="1" y="6" width="4" height="3" fill="#cfe3f8"/><rect x="1" y="11" width="4" height="3" fill="#cfe3f8"/><rect x="6" y="1" width="4" height="3" fill="#cfe3f8"/><rect x="6" y="6" width="4" height="3" fill="#cfe3f8"/><rect x="6" y="11" width="4" height="3" fill="#cfe3f8"/><rect x="11" y="1" width="4" height="3" fill="#8ab8e8"/><rect x="11" y="6" width="4" height="3" fill="#8ab8e8"/><rect x="11" y="11" width="4" height="3" fill="#8ab8e8"/><path d="M2 2 V4 M7 2 V4 M2 7 V9 M7 7 V9 M2 12 V14 M7 12 V14" stroke="#1c4f9a" stroke-width="1"/></svg>
<div class="a" style="left:1888px;top:994px;width:10px;height:1px;background:#1c4f9a"></div>
<div class="a" style="left:4px;top:995px;width:1907px;height:4px;background:#3b4453"></div>
<svg style="left:0;top:990px" width="240" height="40"><path d="M21.6 9 H70.2 L60 32.7 H12Z" fill="#3b4453"/><path d="M116.5 29 L123 12" stroke="#4d5563" stroke-width="1.2"/><path d="M171.5 29 L178 12" stroke="#4d5563" stroke-width="1.2"/><path d="M189 21 H201 M195 15 V27" stroke="#e8e8e8" stroke-width="2"/><path d="M211.5 29 L218 12" stroke="#4d5563" stroke-width="1.2"/></svg>
<div class="t" style="left:29px;top:1004px;font-size:12px;color:#ffffff;font-weight:bold">模型</div>
<div class="t" style="left:77px;top:1005px;font-size:12px;color:#e0e0e0">布局1</div>
<div class="t" style="left:132px;top:1005px;font-size:12px;color:#e0e0e0">布局2</div>
<div class="a" style="left:1386px;top:1001px;width:30px;height:24px;background:#3b4453"></div>
<div class="a" style="left:1419px;top:1001px;width:64px;height:24px;background:#3b4453"></div>
<div class="a" style="left:1486px;top:1001px;width:104px;height:24px;background:#3b4453"></div>
<div class="a" style="left:1591px;top:1001px;width:64px;height:24px;background:#3b4453"></div>
<div class="a" style="left:1658px;top:1001px;width:106px;height:24px;background:#3b4453"></div>
<div class="a" style="left:1767px;top:1001px;width:40px;height:24px;background:#3b4453"></div>
<div class="a" style="left:1808px;top:1001px;width:24px;height:24px;background:#3b4453"></div>
<div class="a" style="left:1835px;top:1001px;width:24px;height:24px;background:#3b4453"></div>
<div class="a" style="left:1862px;top:1001px;width:48px;height:24px;background:#3b4453"></div>
<div class="a" style="left:1420px;top:1002px;width:22px;height:22px;background:#5b8bc4"></div>
<div class="a" style="left:1511px;top:1002px;width:22px;height:22px;background:#5b8bc4"></div>
<div class="a" style="left:1592px;top:1002px;width:22px;height:22px;background:#5b8bc4"></div>
<div class="a" style="left:1616px;top:1002px;width:22px;height:22px;background:#5b8bc4"></div>
<div class="a" style="left:1659px;top:1002px;width:22px;height:22px;background:#5b8bc4"></div>
<div class="t" style="left:1389px;top:1006px;font-size:12.5px;color:#ececec">模型</div>
<div class="t" style="left:1734px;top:1007px;font-size:12px;color:#dcdcdc;letter-spacing:-0.3px">1:1</div>
<svg style="left:0;top:0" width="1916" height="1032">
<path d="M1423 1009.5 H1438 M1423 1013.5 H1438 M1423 1017.5 H1438 M1426.5 1006 V1021 M1430.5 1006 V1021 M1434.5 1006 V1021" stroke="#fff" stroke-width="1"/>
<rect x="1448.5" y="1007" width="2.2" height="2.2" fill="#e4e4e4"/><rect x="1448.5" y="1012" width="2.2" height="2.2" fill="#e4e4e4"/><rect x="1448.5" y="1017" width="2.2" height="2.2" fill="#e4e4e4"/><rect x="1453.5" y="1007" width="2.2" height="2.2" fill="#e4e4e4"/><rect x="1453.5" y="1012" width="2.2" height="2.2" fill="#e4e4e4"/><rect x="1453.5" y="1017" width="2.2" height="2.2" fill="#e4e4e4"/><rect x="1458.5" y="1007" width="2.2" height="2.2" fill="#e4e4e4"/><rect x="1458.5" y="1012" width="2.2" height="2.2" fill="#e4e4e4"/><rect x="1458.5" y="1017" width="2.2" height="2.2" fill="#e4e4e4"/>
<path d="M1471 1012 H1479 L1475 1016Z" fill="#e4e4e4"/>
<path d="M1490.5 1005 V1021 H1506" fill="none" stroke="#e4e4e4" stroke-width="1.1"/><rect x="1490.5" y="1015.5" width="5" height="5" fill="none" stroke="#e4e4e4" stroke-width="1"/>
<circle cx="1520.5" cy="1013.5" r="6" fill="none" stroke="#fff" stroke-width="1.3"/><path d="M1519 1013.5 H1530 M1520 1013 L1527 1006" stroke="#fff" stroke-width="1.2"/>
<path d="M1538 1012 H1546 L1542 1016Z" fill="#e4e4e4"/>
<path d="M1555 1006 L1568 1020" stroke="#e0504a" stroke-width="1.2"/><path d="M1561.5 1005 V1021" stroke="#3bc04a" stroke-width="1.2"/><circle cx="1561.5" cy="1013" r="1.5" fill="#3b4453" stroke="#fff" stroke-width=".8"/>
<path d="M1578 1012 H1586 L1582 1016Z" fill="#e4e4e4"/>
<path d="M1595 1020 H1610 M1596 1020 L1609 1007" stroke="#fff" stroke-width="1.2"/><rect x="1601" y="1012" width="3" height="3" fill="#fff"/>
<rect x="1620.5" y="1008.5" width="14" height="12" fill="none" stroke="#fff" stroke-width="1.2"/><rect x="1619.5" y="1005.5" width="4" height="4" fill="#5b8bc4" stroke="#fff" stroke-width="1"/>
<path d="M1643 1012 H1651 L1647 1016Z" fill="#e4e4e4"/>
<path d="M1670 1005 L1663 1021 L1670 1017 L1677 1021Z" fill="#fff"/><circle cx="1675" cy="1009" r="2.5" fill="none" stroke="#fff" stroke-width="1"/>
<path d="M1695 1006 L1688 1021 L1695 1017 L1702 1021Z" fill="#d0d0d0"/><path d="M1700 1004 L1698 1008 H1701 L1699 1012" fill="none" stroke="#d0d0d0" stroke-width="1"/>
<path d="M1718 1005 L1711 1021 L1718 1017 L1725 1021Z" fill="#d0d0d0"/>
<path d="M1752 1012 H1760 L1756 1016Z" fill="#e4e4e4"/>
<circle cx="1778.5" cy="1013" r="5" fill="none" stroke="#d8d8d8" stroke-width="3.5" stroke-dasharray="2.2 1.7"/><circle cx="1778.5" cy="1013" r="4" fill="none" stroke="#d8d8d8" stroke-width="2"/>
<path d="M1795 1012 H1803 L1799 1016Z" fill="#e4e4e4"/>
<path d="M1812 1013 H1828 M1820 1005 V1021" stroke="#e4e4e4" stroke-width="2"/>
<rect x="1839.5" y="1005.5" width="6" height="6" fill="none" stroke="#e4e4e4" stroke-width="1.1"/><circle cx="1851.2" cy="1011.3" r="3.2" fill="none" stroke="#e4e4e4" stroke-width="1.1"/><path d="M1845.4 1014.5 L1842 1020.5 H1849Z" fill="none" stroke="#e4e4e4" stroke-width="1.1"/>
<rect x="1866.5" y="1007.5" width="15" height="11" fill="none" stroke="#e4e4e4" stroke-width="1.1"/><path d="M1869.5 1016 L1872.5 1013 M1869.5 1016 V1013.5 M1869.5 1016 H1872 M1878.5 1010 L1875.5 1013 M1878.5 1010 V1012.5 M1878.5 1010 H1876" stroke="#e4e4e4" fill="none" stroke-width="1.1"/>
<path d="M1890 1007 H1906 M1890 1013 H1906 M1890 1019 H1906" stroke="#e4e4e4" stroke-width="2"/>
</svg>
<div class="a" style="left:756px;top:267px;width:404px;height:491px;background:#f0f0f0;border:1px solid #3a3d42;box-shadow:0 3px 14px rgba(0,0,0,.35)"></div>
<div class="a" style="left:757px;top:268px;width:402px;height:30px;background:#ffffff"></div>
<div class="a" style="left:1158px;top:298px;width:1px;height:459px;background:#fafafa"></div>
<div class="a" style="left:757px;top:756px;width:402px;height:1px;background:#fafafa"></div>
<div class="t" style="left:765px;top:277px;font-size:12px;color:#000;color:#1a1a1a">[源泉设计]-选图框批量导出图纸</div>
<svg style="left:1138px;top:276px" width="12" height="12"><path d="M0.8 0.8 L10.8 10.8 M10.8 0.8 L0.8 10.8" stroke="#111" stroke-width="1.1"/></svg>
<div class="t" style="left:765px;top:308px;font-size:12px;color:#000;">导出路径<span style="font-family:'Liberation Mono',monospace;font-size:10px">:</span></div>
<div class="a" style="left:830px;top:305px;width:264px;height:18px;background:#fff;border:1px solid #7a7a7a"></div>
<div class="t" style="left:833px;top:309px;font-family:'Liberation Mono',monospace;font-size:10px;color:#000">D:</div>
<div class="a" style="left:1103px;top:303px;width:49px;height:19px;background:#fdfdfd;border:1px solid #cfcfcf;border-radius:4px"></div>
<div class="t" style="left:1103px;top:306px;width:49px;text-align:center;font-size:12px;color:#000">浏览</div>
<div class="a" style="left:765px;top:328px;width:388px;height:50px;background:#fff;border:1px solid #828790"></div>
<div class="a" style="left:766px;top:329px;width:386px;height:12px;background:#0078d7"></div>
<div class="t" style="left:767px;top:330px;font-family:'Liberation Mono',monospace;font-size:10px;color:#fff">D:</div>
<div class="t" style="left:767px;top:342px;font-family:'Liberation Mono',monospace;font-size:10px;color:#000">D:</div>
<div class="t" style="left:767px;top:354px;font-family:'Liberation Mono',monospace;font-size:10px;color:#000">D:</div>
<div class="a" style="left:761px;top:393px;width:222px;height:306px;border:1px solid #dcdcdc;box-shadow:inset 1px 1px 0 #fff, 1px 1px 0 #fff"></div>
<div class="a" style="left:767px;top:391px;width:54px;height:6px;background:#f0f0f0"></div>
<div class="t" style="left:770px;top:387px;font-size:12px;color:#000;">导出设置</div>
<div class="a" style="left:991px;top:393px;width:166px;height:306px;border:1px solid #dcdcdc;box-shadow:inset 1px 1px 0 #fff, 1px 1px 0 #fff"></div>
<div class="a" style="left:997px;top:391px;width:78px;height:6px;background:#f0f0f0"></div>
<div class="t" style="left:1000px;top:387px;font-size:12px;color:#000;">图框选取设置</div>
<div class="t" style="left:766px;top:410px;font-size:12px;color:#000;">导出<span style="font-family:'Liberation Mono',monospace;font-size:10px">.dwg</span>文件名前缀<span style="font-family:'Liberation Mono',monospace;font-size:10px">:</span></div>
<div class="a" style="left:918px;top:407px;width:60px;height:18px;background:#fff;border:1px solid #646464"></div>
<div class="t" style="left:920px;top:411px;font-family:'Liberation Mono',monospace;font-size:10px;color:#000;letter-spacing:0.5px">name</div>
<div class="t" style="left:766px;top:437px;font-size:12px;color:#000;">连接符<span style="font-family:'Liberation Mono',monospace;font-size:10px">(</span>可空置<span style="font-family:'Liberation Mono',monospace;font-size:10px">):</span></div>
<div class="a" style="left:942px;top:434px;width:36px;height:18px;background:#fff;border:1px solid #646464"></div>
<div class="a" style="left:945px;top:448px;width:6px;height:1px;background:#000"></div>
<div class="a" style="left:766px;top:458px;width:13px;height:13px;border:1px solid #505050;border-radius:3px;background:#f7f7f7"></div>
<div class="t" style="left:782px;top:459px;font-size:12px;color:#000;">有日期字串<span style="font-family:'Liberation Mono',monospace;font-size:10px">(</span>如<span style="font-family:'Liberation Mono',monospace;font-size:10px">:20160515)</span></div>
<div class="a" style="left:766px;top:481px;width:13px;height:13px;border:1px solid #505050;border-radius:3px;background:#f7f7f7"></div>
<div class="t" style="left:782px;top:482px;font-size:12px;color:#000;">有分秒字串<span style="font-family:'Liberation Mono',monospace;font-size:10px">(</span>如<span style="font-family:'Liberation Mono',monospace;font-size:10px">:121030)</span></div>
<div class="a" style="left:766px;top:519px;width:13px;height:13px;border:1px solid #505050;border-radius:3px;background:#f7f7f7"></div>
<div class="t" style="left:782px;top:520px;font-size:12px;color:#000;">序数在文件名后</div>
<div class="t" style="left:766px;top:548px;font-size:12px;color:#000;">序数<span style="font-family:'Liberation Mono',monospace;font-size:10px">(</span>可空置<span style="font-family:'Liberation Mono',monospace;font-size:10px">):</span></div>
<div class="a" style="left:942px;top:545px;width:36px;height:18px;background:#fff;border:1px solid #646464"></div>
<div class="t" style="left:944px;top:549px;font-family:'Liberation Mono',monospace;font-size:10px;color:#000">01</div>
<div class="t" style="left:766px;top:570px;font-size:12px;color:#000;">注：<span style="font-family:'Liberation Mono',monospace;font-size:10px">1</span>）起始序数可填入<span style="font-family:'Liberation Mono',monospace;font-size:10px">&nbsp;1</span>、<span style="font-family:'Liberation Mono',monospace;font-size:10px">01</span>、<span style="font-family:'Liberation Mono',monospace;font-size:10px">001</span>等<span style="font-family:'Liberation Mono',monospace;font-size:10px">;</span></div>
<div class="t" style="left:790px;top:591px;font-size:12px;color:#000;"><span style="font-family:'Liberation Mono',monospace;font-size:10px">2</span>）如无属性字段<span style="font-family:'Liberation Mono',monospace;font-size:10px">,</span>必须有序号<span style="font-family:'Liberation Mono',monospace;font-size:10px">;</span></div>
<div class="t" style="left:790px;top:612px;font-size:12px;color:#000;"><span style="font-family:'Liberation Mono',monospace;font-size:10px">3</span>）如有属性字段<span style="font-family:'Liberation Mono',monospace;font-size:10px">,</span>必须限定图块</div>
<div class="a" style="left:766px;top:647px;width:13px;height:13px;border:1px solid #505050;border-radius:3px;background:#f7f7f7"></div>
<div class="t" style="left:782px;top:647px;font-size:12px;color:#000;">文件名加属性字段</div>
<div class="t" style="left:766px;top:679px;font-size:12px;color:#000;color:#9a9a9a">属性标签<span style="font-family:'Liberation Mono',monospace;font-size:10px">:</span></div>
<div class="a" style="left:833px;top:676px;width:84px;height:18px;background:#f0f0f0;border:1px solid #646464"></div>
<div class="a" style="left:927px;top:674px;width:50px;height:18px;background:#fdfdfd;border:1px solid #ececec;border-radius:4px"></div>
<div class="t" style="left:927px;top:677px;width:50px;text-align:center;font-size:12px;color:#9a9a9a">拾取</div>
<div class="a" style="left:996px;top:404px;width:13px;height:13px;border:1px solid #505050;border-radius:3px;background:#f7f7f7"></div>
<div class="t" style="left:1011px;top:405px;font-size:12px;color:#000;">限定块名</div>
<div class="a" style="left:1078px;top:404px;width:13px;height:13px;border:1px solid #505050;border-radius:3px;background:#f7f7f7"></div>
<div class="t" style="left:1093px;top:405px;font-size:12px;color:#000;">限定图层</div>
<div class="a" style="left:997px;top:426px;width:154px;height:34px;background:#fdfdfd;border:1px solid #d3d3d3;border-radius:5px"></div>
<div class="t" style="left:997px;top:437px;width:154px;text-align:center;font-size:12px;color:#000">拾取图块名或图层名</div>
<div class="t" style="left:996px;top:472px;font-size:12px;color:#000;color:#9a9a9a">块名<span style="font-family:'Liberation Mono',monospace;font-size:10px">:</span></div>
<div class="a" style="left:1056px;top:469px;width:96px;height:18px;background:#f0f0f0;border:1px solid #646464"></div>
<div class="t" style="left:996px;top:496px;font-size:12px;color:#000;color:#9a9a9a">层名<span style="font-family:'Liberation Mono',monospace;font-size:10px">:</span></div>
<div class="a" style="left:1056px;top:493px;width:96px;height:18px;background:#f0f0f0;border:1px solid #646464"></div>
<div class="t" style="left:1058px;top:497px;font-family:'Liberation Mono',monospace;font-size:10px;color:#606060">TK</div>
<div class="t" style="left:996px;top:514px;font-size:12px;color:#000;">选取排序<span style="font-family:'Liberation Mono',monospace;font-size:10px">:</span></div>
<div class="a" style="left:996px;top:526px;width:156px;height:170px;background:#fff;border:1px solid #828282"></div>
<div class="a" style="left:997px;top:587px;width:154px;height:12px;background:#0078d7"></div>
<div class="t" style="left:998px;top:526px;font-size:12px;color:#000;transform:scaleY(1.2);transform-origin:0 0">按选取顺序</div>
<div class="t" style="left:998px;top:538px;font-size:12px;color:#000;transform:scaleY(1.2);transform-origin:0 0">从上至下</div>
<div class="t" style="left:998px;top:550px;font-size:12px;color:#000;transform:scaleY(1.2);transform-origin:0 0">从下至上</div>
<div class="t" style="left:998px;top:562px;font-size:12px;color:#000;transform:scaleY(1.2);transform-origin:0 0">从左至右</div>
<div class="t" style="left:998px;top:574px;font-size:12px;color:#000;transform:scaleY(1.2);transform-origin:0 0">从右至左</div>
<div class="t" style="left:998px;top:586px;font-size:12px;color:#fff;transform:scaleY(1.2);transform-origin:0 0">上下分行<span style="font-family:'Liberation Mono',monospace;font-size:10px">,</span>行左起</div>
<div class="t" style="left:998px;top:598px;font-size:12px;color:#000;transform:scaleY(1.2);transform-origin:0 0">上下分行<span style="font-family:'Liberation Mono',monospace;font-size:10px">,</span>行右起</div>
<div class="t" style="left:998px;top:610px;font-size:12px;color:#000;transform:scaleY(1.2);transform-origin:0 0">下上分行<span style="font-family:'Liberation Mono',monospace;font-size:10px">,</span>行左起</div>
<div class="t" style="left:998px;top:622px;font-size:12px;color:#000;transform:scaleY(1.2);transform-origin:0 0">下上分行<span style="font-family:'Liberation Mono',monospace;font-size:10px">,</span>行右起</div>
<div class="t" style="left:998px;top:634px;font-size:12px;color:#000;transform:scaleY(1.2);transform-origin:0 0">左右分列<span style="font-family:'Liberation Mono',monospace;font-size:10px">,</span>列上起</div>
<div class="t" style="left:998px;top:646px;font-size:12px;color:#000;transform:scaleY(1.2);transform-origin:0 0">左右分列<span style="font-family:'Liberation Mono',monospace;font-size:10px">,</span>列下起</div>
<div class="t" style="left:998px;top:658px;font-size:12px;color:#000;transform:scaleY(1.2);transform-origin:0 0">右左分列<span style="font-family:'Liberation Mono',monospace;font-size:10px">,</span>列上起</div>
<div class="t" style="left:998px;top:670px;font-size:12px;color:#000;transform:scaleY(1.2);transform-origin:0 0">右左分列<span style="font-family:'Liberation Mono',monospace;font-size:10px">,</span>列下起</div>
<div class="t" style="left:998px;top:682px;font-size:12px;color:#000;transform:scaleY(1.2);transform-origin:0 0">沿曲线路线排序</div>
<div class="a" style="left:766px;top:704px;width:386px;height:19px;background:#fdfdfd;border:1px solid #d0d0d0;border-radius:4px"></div>
<div class="t" style="left:766px;top:707px;width:386px;text-align:center;font-size:12px;color:#000">参数重设为缺省值</div>
<div class="a" style="left:886px;top:731px;width:70px;height:19px;background:#fdfdfd;border:1px solid #1a74d4;border-radius:4px"></div>
<div class="t" style="left:886px;top:734px;width:70px;text-align:center;font-size:12px;color:#000">确定</div>
<div class="a" style="left:886px;top:731px;width:70px;height:19px;border-radius:4px;box-shadow:inset 0 0 0 1.4px #2a80d8"></div>
<div class="a" style="left:986px;top:731px;width:46px;height:19px;background:#fdfdfd;border:1px solid #d0d0d0;border-radius:4px"></div>
<div class="t" style="left:986px;top:734px;width:46px;text-align:center;font-size:12px;color:#000">取消</div></body></html>
